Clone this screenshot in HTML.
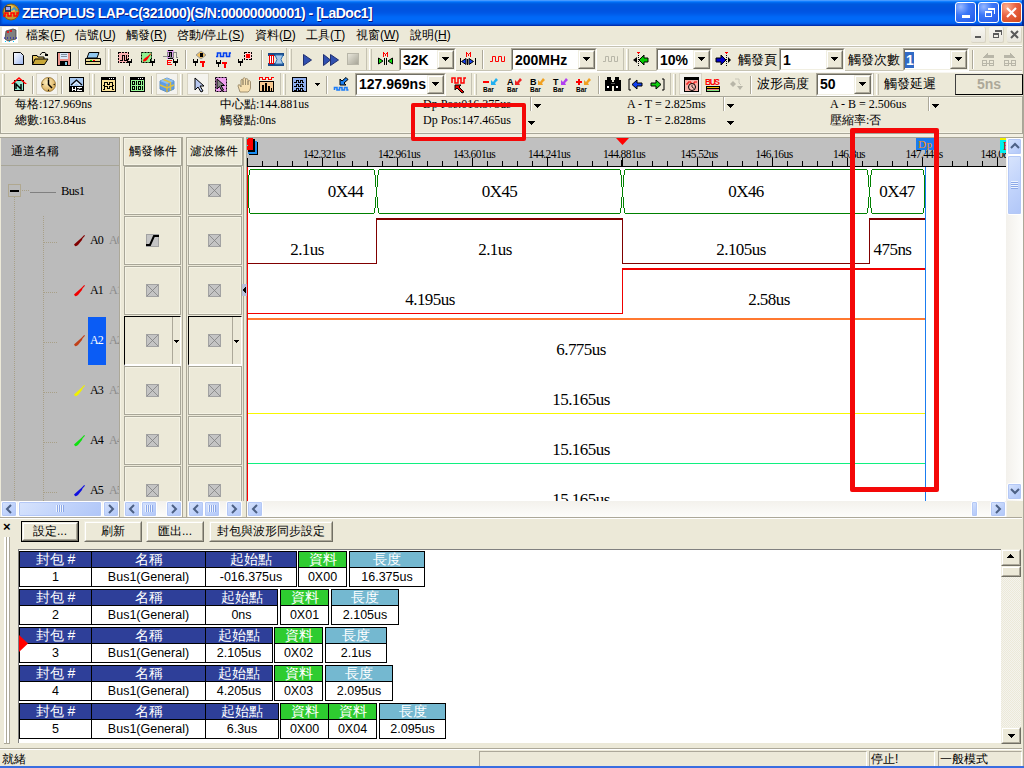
<!DOCTYPE html>
<html><head><meta charset="utf-8">
<style>
*{box-sizing:border-box;margin:0;padding:0}
html,body{width:1024px;height:768px;overflow:hidden;background:#ECE9D8;font-family:"Liberation Sans",sans-serif;font-size:12px;color:#000;position:relative}
.a{position:absolute;white-space:nowrap}
svg.a{overflow:visible}
.ser{font-family:"Liberation Serif",serif}
.b{font-weight:bold}
</style></head><body>
<div class="a" style="left:0px;top:0px;width:1024px;height:26px;background:linear-gradient(to bottom,#4699FF 0px 1px,#127EFF 1px 2px,#006AF0 2px 3px,#005EE4 3px 4px,#0058DE 4px 5px,#0057DE 5px 6px,#0056DE 6px 7px,#0055DF 7px 8px,#0054E0 8px 9px,#0054E0 9px 10px,#0054E1 10px 11px,#0055E3 11px 12px,#0057E5 12px 13px,#005AE8 13px 14px,#005EEC 14px 15px,#0062F0 15px 16px,#0066F5 16px 17px,#0068F7 17px 18px,#0069F8 18px 19px,#0069F8 19px 20px,#0068F7 20px 21px,#0066F5 21px 22px,#0062F0 22px 23px,#005AE8 23px 24px,#0046D0 24px 25px,#0030B0 25px 26px)"></div>
<div class="a" style="left:0px;top:0px;width:3px;height:26px;background:linear-gradient(to right,#0040C0,rgba(0,64,192,0))"></div>
<svg class="a" style="left:2px;top:3px;shape-rendering:auto" width="18" height="18" viewBox="0 0 18 18" shape-rendering="crispEdges"><circle cx="9" cy="9" r="8" fill="#C89830" stroke="#806010"/><circle cx="8" cy="7" r="5" fill="#E8C050"/><rect x="3" y="3" width="6" height="6" fill="#303850"/><rect x="4" y="4" width="4" height="3" fill="#A0A8F0"/><polyline points="1,13 3,13 3,10 6,10 6,13 9,13 9,10 12,10 12,13 15,13 15,10 17,10" fill="none" stroke="#F00" stroke-width="1.5"/><polyline points="9,7 11,7 11,5 13,5 13,7 16,7" fill="none" stroke="#1090F0" stroke-width="1"/></svg>
<div class="a " style="left:22px;top:4px;color:#fff;font-weight:bold;font-size:14px;line-height:18px;text-shadow:1px 1px 0 #0A1883;letter-spacing:-0.48px">ZEROPLUS LAP-C(321000)(S/N:00000000001) - [LaDoc1]</div>
<div class="a" style="left:955px;top:2px;width:21px;height:21px;border:1px solid #fff;border-radius:3px;background:radial-gradient(circle at 25% 20%,#98B8FF 0%,#3C78F8 40%,#2258E8 100%)"></div>
<div class="a" style="left:978px;top:2px;width:21px;height:21px;border:1px solid #fff;border-radius:3px;background:radial-gradient(circle at 25% 20%,#98B8FF 0%,#3C78F8 40%,#2258E8 100%)"></div>
<div class="a" style="left:1001px;top:2px;width:21px;height:21px;border:1px solid #fff;border-radius:3px;background:radial-gradient(circle at 25% 20%,#FFB090 0%,#E86040 45%,#D04818 100%)"></div>
<div class="a" style="left:962px;top:15px;width:8px;height:3px;background:#fff"></div>
<div class="a" style="left:985px;top:11px;width:7px;height:6px;border:1px solid #fff;border-top-width:2px"></div>
<div class="a" style="left:988px;top:8px;width:7px;height:6px;border-top:2px solid #fff;border-right:1px solid #fff"></div>
<svg class="a" style="left:1005px;top:6px;shape-rendering:auto" width="13" height="13" viewBox="0 0 13 13" shape-rendering="crispEdges"><path d="M2,2 L11,11 M11,2 L2,11" stroke="#fff" stroke-width="2.2"/></svg>
<div class="a" style="left:1022px;top:0px;width:2px;height:26px;background:linear-gradient(#0040C0,#002890)"></div>
<div class="a" style="left:1023px;top:26px;width:1px;height:740px;background:#ACA899"></div>
<svg class="a" style="left:2px;top:27px;shape-rendering:auto" width="16" height="16" viewBox="0 0 16 16" shape-rendering="crispEdges"><rect x="0" y="0" width="16" height="16" fill="#fff"/><polygon points="4,4 11,2 14,3 14,12 6,14 3,12" fill="#808080" stroke="#303030" stroke-width="0.7"/><circle cx="6" cy="5" r="1" fill="#F00"/><circle cx="9" cy="4" r="1" fill="#F00"/><line x1="2" y1="11" x2="15" y2="11" stroke="#00C" stroke-dasharray="1,2"/><line x1="3" y1="14.5" x2="15" y2="14.5" stroke="#0CF" stroke-dasharray="1,3"/></svg>
<div class="a " style="left:26px;top:28px;font-size:12px;line-height:15px">檔案(<u>F</u>)</div>
<div class="a " style="left:75px;top:28px;font-size:12px;line-height:15px">信號(<u>U</u>)</div>
<div class="a " style="left:126px;top:28px;font-size:12px;line-height:15px">觸發(<u>R</u>)</div>
<div class="a " style="left:177px;top:28px;font-size:12px;line-height:15px">啓動/停止(<u>S</u>)</div>
<div class="a " style="left:255px;top:28px;font-size:12px;line-height:15px">資料(<u>D</u>)</div>
<div class="a " style="left:306px;top:28px;font-size:12px;line-height:15px">工具(<u>T</u>)</div>
<div class="a " style="left:356px;top:28px;font-size:12px;line-height:15px">視窗(<u>W</u>)</div>
<div class="a " style="left:410px;top:28px;font-size:12px;line-height:15px">說明(<u>H</u>)</div>
<div class="a" style="left:971px;top:27px;width:15px;height:16px;background:linear-gradient(#F8F7F2,#E8E6DC);border-radius:2px;border-right:1px solid #D8D4C4;border-bottom:1px solid #D8D4C4"></div>
<div class="a" style="left:989px;top:27px;width:15px;height:16px;background:linear-gradient(#F8F7F2,#E8E6DC);border-radius:2px;border-right:1px solid #D8D4C4;border-bottom:1px solid #D8D4C4"></div>
<div class="a" style="left:1007px;top:27px;width:15px;height:16px;background:linear-gradient(#F8F7F2,#E8E6DC);border-radius:2px;border-right:1px solid #D8D4C4;border-bottom:1px solid #D8D4C4"></div>
<div class="a" style="left:975px;top:36px;width:6px;height:2px;background:#5A5A5A"></div>
<div class="a" style="left:993px;top:33px;width:6px;height:5px;border:1px solid #5A5A5A;border-top-width:2px"></div>
<div class="a" style="left:995px;top:30px;width:7px;height:5px;border-top:2px solid #5A5A5A;border-right:1px solid #5A5A5A"></div>
<svg class="a" style="left:1010px;top:30px;shape-rendering:auto" width="9" height="9" viewBox="0 0 9 9" shape-rendering="crispEdges"><path d="M1,1 L8,8 M8,1 L1,8" stroke="#5A5A5A" stroke-width="2"/></svg>
<div class="a" style="left:0px;top:45px;width:1022px;height:1px;background:#fff"></div>
<div class="a" style="left:0px;top:46px;width:1022px;height:1px;background:#C5C2B2"></div>
<div class="a" style="left:0px;top:47px;width:1022px;height:1px;background:#F8F7F1"></div>
<div class="a" style="left:0px;top:70px;width:1022px;height:1px;background:#C5C2B2"></div>
<div class="a" style="left:0px;top:71px;width:1022px;height:1px;background:#FFFFFF"></div>
<div class="a" style="left:0px;top:72px;width:1022px;height:1px;background:#F8F7F1"></div>
<div class="a" style="left:0px;top:96px;width:1023px;height:1px;background:#A8A698"></div>
<div class="a" style="left:2px;top:49px;width:1px;height:21px;background:#fff"></div>
<div class="a" style="left:3px;top:49px;width:1px;height:21px;background:#ECE9D8"></div>
<div class="a" style="left:4px;top:49px;width:1px;height:21px;background:#C5C2B2"></div>
<div class="a" style="left:108px;top:49px;width:1px;height:21px;background:#fff"></div>
<div class="a" style="left:109px;top:49px;width:1px;height:21px;background:#ECE9D8"></div>
<div class="a" style="left:110px;top:49px;width:1px;height:21px;background:#C5C2B2"></div>
<div class="a" style="left:289px;top:49px;width:1px;height:21px;background:#fff"></div>
<div class="a" style="left:290px;top:49px;width:1px;height:21px;background:#ECE9D8"></div>
<div class="a" style="left:291px;top:49px;width:1px;height:21px;background:#C5C2B2"></div>
<div class="a" style="left:369px;top:49px;width:1px;height:21px;background:#fff"></div>
<div class="a" style="left:370px;top:49px;width:1px;height:21px;background:#ECE9D8"></div>
<div class="a" style="left:371px;top:49px;width:1px;height:21px;background:#C5C2B2"></div>
<div class="a" style="left:626px;top:49px;width:1px;height:21px;background:#fff"></div>
<div class="a" style="left:627px;top:49px;width:1px;height:21px;background:#ECE9D8"></div>
<div class="a" style="left:628px;top:49px;width:1px;height:21px;background:#C5C2B2"></div>
<div class="a" style="left:105px;top:48px;width:1px;height:22px;background:#C5C2B2"></div>
<div class="a" style="left:286px;top:48px;width:1px;height:22px;background:#C5C2B2"></div>
<div class="a" style="left:366px;top:48px;width:1px;height:22px;background:#C5C2B2"></div>
<div class="a" style="left:623px;top:48px;width:1px;height:22px;background:#C5C2B2"></div>
<div class="a" style="left:2px;top:74px;width:1px;height:21px;background:#fff"></div>
<div class="a" style="left:3px;top:74px;width:1px;height:21px;background:#ECE9D8"></div>
<div class="a" style="left:4px;top:74px;width:1px;height:21px;background:#C5C2B2"></div>
<div class="a" style="left:92px;top:74px;width:1px;height:21px;background:#fff"></div>
<div class="a" style="left:93px;top:74px;width:1px;height:21px;background:#ECE9D8"></div>
<div class="a" style="left:94px;top:74px;width:1px;height:21px;background:#C5C2B2"></div>
<div class="a" style="left:180px;top:74px;width:1px;height:21px;background:#fff"></div>
<div class="a" style="left:181px;top:74px;width:1px;height:21px;background:#ECE9D8"></div>
<div class="a" style="left:182px;top:74px;width:1px;height:21px;background:#C5C2B2"></div>
<div class="a" style="left:283px;top:74px;width:1px;height:21px;background:#fff"></div>
<div class="a" style="left:284px;top:74px;width:1px;height:21px;background:#ECE9D8"></div>
<div class="a" style="left:285px;top:74px;width:1px;height:21px;background:#C5C2B2"></div>
<div class="a" style="left:474px;top:74px;width:1px;height:21px;background:#fff"></div>
<div class="a" style="left:475px;top:74px;width:1px;height:21px;background:#ECE9D8"></div>
<div class="a" style="left:476px;top:74px;width:1px;height:21px;background:#C5C2B2"></div>
<div class="a" style="left:673px;top:74px;width:1px;height:21px;background:#fff"></div>
<div class="a" style="left:674px;top:74px;width:1px;height:21px;background:#ECE9D8"></div>
<div class="a" style="left:675px;top:74px;width:1px;height:21px;background:#C5C2B2"></div>
<div class="a" style="left:876px;top:74px;width:1px;height:21px;background:#fff"></div>
<div class="a" style="left:877px;top:74px;width:1px;height:21px;background:#ECE9D8"></div>
<div class="a" style="left:878px;top:74px;width:1px;height:21px;background:#C5C2B2"></div>
<div class="a" style="left:89px;top:73px;width:1px;height:22px;background:#C5C2B2"></div>
<div class="a" style="left:177px;top:73px;width:1px;height:22px;background:#C5C2B2"></div>
<div class="a" style="left:280px;top:73px;width:1px;height:22px;background:#C5C2B2"></div>
<div class="a" style="left:471px;top:73px;width:1px;height:22px;background:#C5C2B2"></div>
<div class="a" style="left:670px;top:73px;width:1px;height:22px;background:#C5C2B2"></div>
<div class="a" style="left:873px;top:73px;width:1px;height:22px;background:#C5C2B2"></div>
<svg class="a" style="left:13px;top:52px;shape-rendering:auto" width="12" height="14" viewBox="0 0 12 14" shape-rendering="crispEdges"><defs><linearGradient id="gn" x1="0" y1="0" x2="1" y2="1"><stop offset="0" stop-color="#fff"/><stop offset="1" stop-color="#9DB8EE"/></linearGradient></defs><polygon points="0.5,0.5 7.5,0.5 10.5,3.5 10.5,12.5 0.5,12.5" fill="url(#gn)" stroke="#000"/></svg>
<svg class="a" style="left:32px;top:52px;shape-rendering:auto" width="17" height="14" viewBox="0 0 17 14" shape-rendering="crispEdges"><polygon points="0.5,3.5 5,3.5 6,5 12,5 12,12.5 0.5,12.5" fill="#E8C860" stroke="#000"/><polygon points="3,7 16,7 12.5,12.5 0.5,12.5" fill="#C8A838" stroke="#000"/><polyline points="8,3 10,0.5 13,0.5 15,3" fill="none" stroke="#000" stroke-width="1"/><rect x="13" y="2" width="3" height="2" fill="#000"/></svg>
<svg class="a" style="left:57px;top:52px;" width="14" height="14" viewBox="0 0 14 14" shape-rendering="crispEdges"><rect x="0" y="0" width="14" height="14" fill="#000"/><rect x="1" y="1" width="12" height="12" fill="#E89088"/><rect x="3" y="1" width="8" height="6" fill="#D8E8F8"/><rect x="4" y="2" width="6" height="1" fill="#8090A0"/><rect x="4" y="4" width="6" height="1" fill="#8090A0"/><rect x="3" y="9" width="8" height="4" fill="#000"/><rect x="8" y="10" width="2" height="3" fill="#80D0E8"/></svg>
<div class="a" style="left:78px;top:50px;width:1px;height:19px;background:#ACA899"></div>
<div class="a" style="left:79px;top:50px;width:1px;height:19px;background:#fff"></div>
<svg class="a" style="left:85px;top:52px;shape-rendering:auto" width="16" height="14" viewBox="0 0 16 14" shape-rendering="crispEdges"><polygon points="4,0.5 14,0.5 12,6 2,6" fill="#90C8F0" stroke="#000"/><polygon points="0.5,6.5 15.5,6.5 15.5,12.5 0.5,12.5" fill="#E8D898" stroke="#000"/><rect x="1" y="9" width="14" height="1" fill="#000"/><rect x="5" y="8" width="2" height="1" fill="#0C0"/><rect x="8" y="8" width="2" height="1" fill="#F00"/></svg>
<svg class="a" style="left:118px;top:52px;" width="16" height="15" viewBox="0 0 16 15" shape-rendering="crispEdges"><rect x="0" y="0" width="11" height="11" fill="#F8B0B0"/><rect x="0.5" y="0.5" width="10" height="10" fill="none" stroke="#000" stroke-dasharray="2,1"/><polyline points="2,8 4,8 4,3 6,3 6,8 8,8 8,3 9,3" fill="none" stroke="#000" stroke-width="1"/><rect x="9" y="7" width="1" height="3" fill="#000"/><rect x="13" y="7" width="1" height="3" fill="#000"/><rect x="9" y="9" width="5" height="2" fill="#000"/><rect x="11" y="10" width="1" height="4" fill="#000"/></svg>
<svg class="a" style="left:141px;top:52px;shape-rendering:auto" width="16" height="15" viewBox="0 0 16 15" shape-rendering="crispEdges"><rect x="0" y="0" width="11" height="11" fill="#90F090"/><rect x="0.5" y="0.5" width="10" height="10" fill="none" stroke="#000" stroke-dasharray="2,1"/><path d="M2,9.5 Q1.5,7.5 4,6 L7,4 L9.5,1.5 L10,2 L8,5 L6,8 Q4,10 2,9.5 Z" fill="#F00"/><rect x="9" y="7" width="1" height="3" fill="#000"/><rect x="13" y="7" width="1" height="3" fill="#000"/><rect x="9" y="9" width="5" height="2" fill="#000"/><rect x="11" y="10" width="1" height="4" fill="#000"/></svg>
<svg class="a" style="left:163px;top:50px;" width="16" height="16" viewBox="0 0 16 16" shape-rendering="crispEdges"><rect x="4" y="0" width="7" height="9" fill="#E0A0F0"/><rect x="5" y="0" width="5" height="1" fill="#000"/><rect x="5" y="8" width="5" height="1" fill="#000"/><polyline points="0,6 4,6 4,2 7,2 7,7 10,7 10,2 13,2 13,7 15,7" fill="none" stroke="#888" stroke-width="1"/><polyline points="5,6 6,6 6,2 8,2 8,6 9,6" fill="none" stroke="#000" stroke-width="1"/><rect x="4" y="10" width="5" height="1" fill="#F00"/><rect x="4" y="10" width="1" height="5" fill="#F00"/><rect x="4" y="12" width="4" height="1" fill="#F00"/><rect x="4" y="14" width="5" height="1" fill="#F00"/><rect x="10" y="9" width="1" height="3" fill="#000"/><rect x="14" y="9" width="1" height="3" fill="#000"/><rect x="10" y="11" width="5" height="2" fill="#000"/><rect x="12" y="12" width="1" height="4" fill="#000"/></svg>
<div class="a" style="left:185px;top:50px;width:1px;height:19px;background:#ACA899"></div>
<div class="a" style="left:186px;top:50px;width:1px;height:19px;background:#fff"></div>
<svg class="a" style="left:193px;top:51px;shape-rendering:auto" width="16" height="16" viewBox="0 0 16 16" shape-rendering="crispEdges"><polygon points="3,4 8,0 13,4 8,8" fill="#F0C060" stroke="#999"/><rect x="7" y="2" width="3" height="4" fill="#000"/><rect x="0" y="8" width="1" height="3" fill="#000"/><rect x="4" y="8" width="1" height="3" fill="#000"/><rect x="0" y="10" width="5" height="2" fill="#000"/><rect x="2" y="11" width="1" height="4" fill="#000"/><rect x="7" y="10" width="5" height="1" fill="#F00"/><rect x="9" y="10" width="1" height="5" fill="#F00"/><rect x="7" y="10" width="5" height="2" fill="#F00"/><rect x="9" y="10" width="2" height="6" fill="#F00"/></svg>
<svg class="a" style="left:216px;top:52px;shape-rendering:auto" width="16" height="16" viewBox="0 0 16 16" shape-rendering="crispEdges"><polyline points="0,4.5 1.5,4.5 1.5,1 4.5,1 4.5,4.5 7.5,4.5 7.5,1 10.5,1 10.5,4.5 13.5,4.5 13.5,1 15,1" fill="none" stroke="#0040F0" stroke-width="1.6"/><rect x="0" y="8" width="1" height="3" fill="#000"/><rect x="4" y="8" width="1" height="3" fill="#000"/><rect x="0" y="10" width="5" height="2" fill="#000"/><rect x="2" y="11" width="1" height="4" fill="#000"/><rect x="6" y="10" width="5" height="1" fill="#F00"/><rect x="8" y="10" width="1" height="5" fill="#F00"/><rect x="6" y="10" width="5" height="2" fill="#F00"/><rect x="8" y="10" width="2" height="6" fill="#F00"/></svg>
<svg class="a" style="left:238px;top:52px;" width="16" height="15" viewBox="0 0 16 15" shape-rendering="crispEdges"><rect x="6" y="0" width="8" height="8" fill="#FFD0D0"/><rect x="6.5" y="0.5" width="7" height="7" fill="none" stroke="#000" stroke-dasharray="2,1"/><rect x="8" y="2" width="4" height="4" fill="#F00"/><rect x="0" y="7" width="1" height="3" fill="#000"/><rect x="4" y="7" width="1" height="3" fill="#000"/><rect x="0" y="9" width="5" height="2" fill="#000"/><rect x="2" y="10" width="1" height="4" fill="#000"/></svg>
<div class="a" style="left:261px;top:50px;width:1px;height:19px;background:#ACA899"></div>
<div class="a" style="left:262px;top:50px;width:1px;height:19px;background:#fff"></div>
<svg class="a" style="left:268px;top:52px;shape-rendering:auto" width="16" height="15" viewBox="0 0 16 15" shape-rendering="crispEdges"><rect x="0" y="1" width="16" height="3" fill="#1A4A8A"/><rect x="0" y="11" width="16" height="3" fill="#1A4A8A"/><rect x="1" y="3" width="5" height="9" fill="#E00"/><rect x="2" y="4" width="1" height="7" fill="#fff"/><rect x="4" y="4" width="1" height="7" fill="#fff"/><polygon points="7,3 15,3 13,7.5 15,12 7,12 9,7.5" fill="#A8C8E8" stroke="#3070B0"/></svg>
<svg class="a" style="left:303px;top:54px;shape-rendering:auto" width="9" height="12" viewBox="0 0 9 12" shape-rendering="crispEdges"><polygon points="0.5,0.5 8.5,6 0.5,11.5" fill="#3050B0" stroke="#203070"/></svg>
<svg class="a" style="left:323px;top:54px;shape-rendering:auto" width="16" height="12" viewBox="0 0 16 12" shape-rendering="crispEdges"><polygon points="0.5,0.5 7.5,6 0.5,11.5" fill="#3050B0" stroke="#203070"/><polygon points="7.5,0.5 15.5,6 7.5,11.5" fill="#3050B0" stroke="#203070"/></svg>
<svg class="a" style="left:347px;top:53px;" width="12" height="12" viewBox="0 0 12 12" shape-rendering="crispEdges"><defs><linearGradient id="gs" x1="0" y1="0" x2="1" y2="1"><stop offset="0" stop-color="#E8E6DA"/><stop offset="1" stop-color="#A8A698"/></linearGradient></defs><rect x="0" y="0" width="12" height="12" fill="#B8B6A8"/><rect x="1" y="1" width="10" height="10" fill="url(#gs)"/></svg>
<svg class="a" style="left:378px;top:52px;shape-rendering:auto" width="16" height="14" viewBox="0 0 16 14" shape-rendering="crispEdges"><rect x="5" y="0" width="1" height="5" fill="#F00"/><rect x="6" y="1" width="1" height="1" fill="#F00"/><rect x="7" y="2" width="1" height="2" fill="#F00"/><rect x="8" y="1" width="1" height="1" fill="#F00"/><rect x="9" y="0" width="1" height="5" fill="#F00"/><rect x="4" y="0" width="7" height="1" fill="none"/><polygon points="0.5,6 5,9 0.5,12" fill="#10E010" stroke="#000"/><rect x="6" y="6" width="1" height="7" fill="#000"/><rect x="8" y="6" width="1" height="7" fill="#000"/><polygon points="14.5,6 10,9 14.5,12" fill="#10E010" stroke="#000"/></svg>
<div class="a" style="left:399px;top:48px;width:57px;height:23px;background:#fff;border-top:1px solid #ACA899;border-left:1px solid #ACA899;border-bottom:1px solid #fff;border-right:1px solid #fff"></div>
<div class="a" style="left:400px;top:49px;width:55px;height:21px;border-top:1px solid #716F64;border-left:1px solid #716F64;border-bottom:1px solid #F1EFE2;border-right:1px solid #F1EFE2"></div>
<div class="a" style="left:437px;top:50px;width:17px;height:19px;background:#ECE9D8;border-top:1px solid #F1EFE2;border-left:1px solid #F1EFE2;border-bottom:1px solid #716F64;border-right:1px solid #716F64"></div>
<div class="a" style="left:438px;top:51px;width:15px;height:17px;border-top:1px solid #fff;border-left:1px solid #fff;border-bottom:1px solid #ACA899;border-right:1px solid #ACA899"></div>
<svg class="a" style="left:442px;top:57px;" width="7" height="4" viewBox="0 0 7 4" shape-rendering="crispEdges"><rect x="0" y="0" width="7" height="1" fill="#000"/><rect x="1" y="1" width="5" height="1" fill="#000"/><rect x="2" y="2" width="3" height="1" fill="#000"/><rect x="3" y="3" width="1" height="1" fill="#000"/></svg>
<div class="a " style="left:403px;top:53px;font-weight:bold;font-size:14px;line-height:14px;">32K</div>
<svg class="a" style="left:460px;top:52px;shape-rendering:auto" width="16" height="14" viewBox="0 0 16 14" shape-rendering="crispEdges"><rect x="6" y="0" width="1" height="5" fill="#F00"/><rect x="7" y="1" width="1" height="1" fill="#F00"/><rect x="8" y="2" width="1" height="2" fill="#F00"/><rect x="9" y="1" width="1" height="1" fill="#F00"/><rect x="10" y="0" width="1" height="5" fill="#F00"/><rect x="5" y="0" width="7" height="1" fill="none"/><rect x="0" y="6" width="1" height="7" fill="#000"/><polygon points="1.5,9.5 6,6.5 6,12.5" fill="#1040F0" stroke="#000"/><rect x="7" y="7" width="1" height="6" fill="#000"/><polygon points="13.5,9.5 9,6.5 9,12.5" fill="#1040F0" stroke="#000"/><rect x="15" y="6" width="1" height="7" fill="#000"/></svg>
<div class="a" style="left:482px;top:50px;width:1px;height:19px;background:#ACA899"></div>
<div class="a" style="left:483px;top:50px;width:1px;height:19px;background:#fff"></div>
<svg class="a" style="left:490px;top:55px;shape-rendering:auto" width="16" height="8" viewBox="0 0 16 8" shape-rendering="crispEdges"><polyline points="0,6.5 2.5,6.5 2.5,1.5 5.5,1.5 5.5,6.5 8.5,6.5 8.5,1.5 11.5,1.5 11.5,6.5 14.5,6.5 14.5,1.5 15,1.5" fill="none" stroke="#F00" stroke-width="1"/></svg>
<div class="a" style="left:511px;top:48px;width:86px;height:23px;background:#fff;border-top:1px solid #ACA899;border-left:1px solid #ACA899;border-bottom:1px solid #fff;border-right:1px solid #fff"></div>
<div class="a" style="left:512px;top:49px;width:84px;height:21px;border-top:1px solid #716F64;border-left:1px solid #716F64;border-bottom:1px solid #F1EFE2;border-right:1px solid #F1EFE2"></div>
<div class="a" style="left:578px;top:50px;width:17px;height:19px;background:#ECE9D8;border-top:1px solid #F1EFE2;border-left:1px solid #F1EFE2;border-bottom:1px solid #716F64;border-right:1px solid #716F64"></div>
<div class="a" style="left:579px;top:51px;width:15px;height:17px;border-top:1px solid #fff;border-left:1px solid #fff;border-bottom:1px solid #ACA899;border-right:1px solid #ACA899"></div>
<svg class="a" style="left:583px;top:57px;" width="7" height="4" viewBox="0 0 7 4" shape-rendering="crispEdges"><rect x="0" y="0" width="7" height="1" fill="#000"/><rect x="1" y="1" width="5" height="1" fill="#000"/><rect x="2" y="2" width="3" height="1" fill="#000"/><rect x="3" y="3" width="1" height="1" fill="#000"/></svg>
<div class="a " style="left:515px;top:53px;font-weight:bold;font-size:14px;line-height:14px;">200MHz</div>
<svg class="a" style="left:603px;top:55px;shape-rendering:auto" width="16" height="8" viewBox="0 0 16 8" shape-rendering="crispEdges"><polyline points="0,6.5 2.5,6.5 2.5,1.5 5.5,1.5 5.5,6.5 8.5,6.5 8.5,1.5 11.5,1.5 11.5,6.5 14.5,6.5 14.5,1.5 15,1.5" fill="none" stroke="#B8B6A8" stroke-width="1"/></svg>
<svg class="a" style="left:633px;top:52px;shape-rendering:auto" width="16" height="15" viewBox="0 0 16 15" shape-rendering="crispEdges"><rect x="4" y="0" width="3" height="1" fill="#F00"/><rect x="5" y="1" width="1" height="1" fill="#F00"/><rect x="5" y="3" width="1" height="1" fill="#000"/><rect x="5" y="5" width="1" height="1" fill="#000"/><rect x="5" y="7" width="1" height="1" fill="#000"/><rect x="5" y="9" width="1" height="1" fill="#000"/><rect x="5" y="11" width="1" height="1" fill="#000"/><rect x="5" y="13" width="1" height="1" fill="#000"/><polygon points="6,8 11,3 11,6 15,6 15,10 11,10 11,13" fill="#0C0" stroke="#000"/><polygon points="0,8 4,5 4,11" fill="#000" stroke="none"/></svg>
<div class="a" style="left:656px;top:48px;width:56px;height:23px;background:#fff;border-top:1px solid #ACA899;border-left:1px solid #ACA899;border-bottom:1px solid #fff;border-right:1px solid #fff"></div>
<div class="a" style="left:657px;top:49px;width:54px;height:21px;border-top:1px solid #716F64;border-left:1px solid #716F64;border-bottom:1px solid #F1EFE2;border-right:1px solid #F1EFE2"></div>
<div class="a" style="left:693px;top:50px;width:17px;height:19px;background:#ECE9D8;border-top:1px solid #F1EFE2;border-left:1px solid #F1EFE2;border-bottom:1px solid #716F64;border-right:1px solid #716F64"></div>
<div class="a" style="left:694px;top:51px;width:15px;height:17px;border-top:1px solid #fff;border-left:1px solid #fff;border-bottom:1px solid #ACA899;border-right:1px solid #ACA899"></div>
<svg class="a" style="left:698px;top:57px;" width="7" height="4" viewBox="0 0 7 4" shape-rendering="crispEdges"><rect x="0" y="0" width="7" height="1" fill="#000"/><rect x="1" y="1" width="5" height="1" fill="#000"/><rect x="2" y="2" width="3" height="1" fill="#000"/><rect x="3" y="3" width="1" height="1" fill="#000"/></svg>
<div class="a " style="left:660px;top:53px;font-weight:bold;font-size:14px;line-height:14px;">10%</div>
<svg class="a" style="left:716px;top:52px;shape-rendering:auto" width="16" height="15" viewBox="0 0 16 15" shape-rendering="crispEdges"><rect x="9" y="0" width="3" height="1" fill="#F00"/><rect x="10" y="1" width="1" height="1" fill="#F00"/><rect x="10" y="3" width="1" height="1" fill="#000"/><rect x="10" y="5" width="1" height="1" fill="#000"/><rect x="10" y="7" width="1" height="1" fill="#000"/><rect x="10" y="9" width="1" height="1" fill="#000"/><rect x="10" y="11" width="1" height="1" fill="#000"/><rect x="10" y="13" width="1" height="1" fill="#000"/><polygon points="10,8 5,3 5,6 0,6 0,10 5,10 5,13" fill="#00C" stroke="#000"/><polygon points="15,8 12,5 12,11" fill="#000" stroke="none"/></svg>
<div class="a " style="left:738px;top:52px;font-size:13px;line-height:16px">觸發頁</div>
<div class="a" style="left:779px;top:48px;width:66px;height:23px;background:#fff;border-top:1px solid #ACA899;border-left:1px solid #ACA899;border-bottom:1px solid #fff;border-right:1px solid #fff"></div>
<div class="a" style="left:780px;top:49px;width:64px;height:21px;border-top:1px solid #716F64;border-left:1px solid #716F64;border-bottom:1px solid #F1EFE2;border-right:1px solid #F1EFE2"></div>
<div class="a" style="left:826px;top:50px;width:17px;height:19px;background:#ECE9D8;border-top:1px solid #F1EFE2;border-left:1px solid #F1EFE2;border-bottom:1px solid #716F64;border-right:1px solid #716F64"></div>
<div class="a" style="left:827px;top:51px;width:15px;height:17px;border-top:1px solid #fff;border-left:1px solid #fff;border-bottom:1px solid #ACA899;border-right:1px solid #ACA899"></div>
<svg class="a" style="left:831px;top:57px;" width="7" height="4" viewBox="0 0 7 4" shape-rendering="crispEdges"><rect x="0" y="0" width="7" height="1" fill="#000"/><rect x="1" y="1" width="5" height="1" fill="#000"/><rect x="2" y="2" width="3" height="1" fill="#000"/><rect x="3" y="3" width="1" height="1" fill="#000"/></svg>
<div class="a " style="left:783px;top:53px;font-weight:bold;font-size:14px;line-height:14px;">1</div>
<div class="a " style="left:848px;top:52px;font-size:13px;line-height:16px">觸發次數</div>
<div class="a" style="left:903px;top:48px;width:66px;height:23px;background:#fff;border-top:1px solid #ACA899;border-left:1px solid #ACA899;border-bottom:1px solid #fff;border-right:1px solid #fff"></div>
<div class="a" style="left:904px;top:49px;width:64px;height:21px;border-top:1px solid #716F64;border-left:1px solid #716F64;border-bottom:1px solid #F1EFE2;border-right:1px solid #F1EFE2"></div>
<div class="a" style="left:950px;top:50px;width:17px;height:19px;background:#ECE9D8;border-top:1px solid #F1EFE2;border-left:1px solid #F1EFE2;border-bottom:1px solid #716F64;border-right:1px solid #716F64"></div>
<div class="a" style="left:951px;top:51px;width:15px;height:17px;border-top:1px solid #fff;border-left:1px solid #fff;border-bottom:1px solid #ACA899;border-right:1px solid #ACA899"></div>
<svg class="a" style="left:955px;top:57px;" width="7" height="4" viewBox="0 0 7 4" shape-rendering="crispEdges"><rect x="0" y="0" width="7" height="1" fill="#000"/><rect x="1" y="1" width="5" height="1" fill="#000"/><rect x="2" y="2" width="3" height="1" fill="#000"/><rect x="3" y="3" width="1" height="1" fill="#000"/></svg>
<div class="a" style="left:905px;top:52px;width:9px;height:16px;background:#316AC5"></div>
<div class="a " style="left:906px;top:53px;color:#fff;font-weight:bold;font-size:14px;line-height:14px">1</div>
<div class="a" style="left:972px;top:50px;width:1px;height:19px;background:#ACA899"></div>
<div class="a" style="left:973px;top:50px;width:1px;height:19px;background:#fff"></div>
<svg class="a" style="left:981px;top:52px;" width="14" height="14" viewBox="0 0 14 14" shape-rendering="crispEdges"><polygon points="2,5 7,1 7,3 13,3 13,6 2,6" fill="#B8B6A8" stroke="none"/><rect x="1" y="8" width="5" height="6" fill="none"/><rect x="1.5" y="8.5" width="4" height="5" fill="none" stroke="#B8B6A8"/><rect x="8.5" y="8.5" width="4" height="5" fill="none" stroke="#B8B6A8"/><rect x="1" y="11" width="12" height="1" fill="#B8B6A8"/></svg>
<svg class="a" style="left:1003px;top:52px;" width="14" height="14" viewBox="0 0 14 14" shape-rendering="crispEdges"><polygon points="12,5 7,1 7,3 1,3 1,6 12,6" fill="#B8B6A8" stroke="none"/><rect x="1.5" y="8.5" width="4" height="5" fill="none" stroke="#B8B6A8"/><rect x="8.5" y="8.5" width="4" height="5" fill="none" stroke="#B8B6A8"/><rect x="1" y="11" width="12" height="1" fill="#B8B6A8"/></svg>
<svg class="a" style="left:11px;top:77px;shape-rendering:auto" width="16" height="15" viewBox="0 0 16 15" shape-rendering="crispEdges"><rect x="3" y="3" width="10" height="11" fill="#000"/><rect x="4" y="4" width="8" height="9" fill="#90E8D0"/><polygon points="0,7 8,0 16,7 14,7 8,2 2,7" fill="#F00" stroke="none"/><polyline points="5,12 5,7 10,12 10,7" fill="none" stroke="#000" stroke-width="1.5"/></svg>
<div class="a" style="left:32px;top:76px;width:1px;height:18px;background:#ACA899"></div>
<div class="a" style="left:33px;top:76px;width:1px;height:18px;background:#fff"></div>
<div class="a" style="left:36px;top:73px;width:22px;height:22px;background:#F4F3EE;border:1px solid #D8D4C4"></div>
<svg class="a" style="left:41px;top:77px;shape-rendering:auto" width="15" height="15" viewBox="0 0 15 15" shape-rendering="crispEdges"><defs><radialGradient id="gc" cx="0.4" cy="0.35" r="0.7"><stop offset="0" stop-color="#FFF0C0"/><stop offset="1" stop-color="#D8A850"/></radialGradient></defs><circle cx="7.5" cy="7.5" r="7" fill="url(#gc)" stroke="#A08040"/><polyline points="7.5,2.5 7.5,7.5 11,11" fill="none" stroke="#000" stroke-width="1.5"/><circle cx="7.5" cy="1.8" r="0.7" fill="#000"/><circle cx="13.2" cy="7.5" r="0.7" fill="#000"/><circle cx="7.5" cy="13.2" r="0.7" fill="#000"/><circle cx="1.8" cy="7.5" r="0.7" fill="#000"/></svg>
<div class="a" style="left:61px;top:76px;width:1px;height:18px;background:#ACA899"></div>
<div class="a" style="left:62px;top:76px;width:1px;height:18px;background:#fff"></div>
<svg class="a" style="left:69px;top:77px;shape-rendering:auto" width="15" height="15" viewBox="0 0 15 15" shape-rendering="crispEdges"><rect x="0" y="0" width="15" height="15" fill="#000"/><rect x="1" y="1" width="13" height="8" fill="#A8C8F0"/><polyline points="2,8 7.5,3 13,8" fill="none" stroke="#000" stroke-width="1.2"/><polyline points="4,8 7.5,5.5 11,8" fill="none" stroke="#fff" stroke-width="1"/><rect x="3" y="10" width="1" height="4" fill="#fff"/><rect x="6" y="10" width="1" height="4" fill="#fff"/><rect x="3" y="12" width="4" height="1" fill="#fff"/><rect x="8" y="10" width="5" height="1" fill="#fff"/><rect x="8" y="13" width="5" height="1" fill="#fff"/><polygon points="12,10 13,10 9,13 8,13" fill="#fff" stroke="none"/></svg>
<svg class="a" style="left:101px;top:77px;" width="15" height="15" viewBox="0 0 15 15" shape-rendering="crispEdges"><rect x="0" y="0" width="15" height="15" fill="#000"/><rect x="1" y="3" width="13" height="11" fill="#F8E098"/><rect x="10" y="1" width="1" height="1" fill="#fff"/><rect x="12" y="1" width="1" height="1" fill="#fff"/><rect x="8" y="1" width="1" height="1" fill="#fff"/><polyline points="2,8 3,8 3,5 6,5 6,7 8,7 8,5 11,5 11,8 13,8" fill="none" stroke="#000" stroke-width="1"/><polyline points="2,12 3,12 3,9 6,9 6,11 8,11 8,9 11,9 11,12 13,12" fill="none" stroke="#000" stroke-width="1"/></svg>
<div class="a" style="left:123px;top:76px;width:1px;height:18px;background:#ACA899"></div>
<div class="a" style="left:124px;top:76px;width:1px;height:18px;background:#fff"></div>
<svg class="a" style="left:130px;top:77px;" width="15" height="15" viewBox="0 0 15 15" shape-rendering="crispEdges"><rect x="0" y="0" width="15" height="15" fill="#000"/><rect x="1" y="3" width="13" height="11" fill="#98F898"/><rect x="10" y="1" width="1" height="1" fill="#fff"/><rect x="12" y="1" width="1" height="1" fill="#fff"/><rect x="8" y="1" width="1" height="1" fill="#fff"/><rect x="2" y="4" width="3" height="4" fill="#000"/><rect x="3" y="5" width="1" height="2" fill="#98F898"/><rect x="6" y="4" width="1" height="4" fill="#000"/><rect x="8" y="4" width="3" height="4" fill="#000"/><rect x="9" y="5" width="1" height="2" fill="#98F898"/><rect x="12" y="4" width="1" height="4" fill="#000"/><rect x="2" y="9" width="3" height="4" fill="#000"/><rect x="3" y="10" width="1" height="2" fill="#98F898"/><rect x="6" y="9" width="1" height="4" fill="#000"/><rect x="8" y="9" width="3" height="4" fill="#000"/><rect x="9" y="10" width="1" height="2" fill="#98F898"/><rect x="12" y="9" width="1" height="4" fill="#000"/></svg>
<div class="a" style="left:151px;top:76px;width:1px;height:18px;background:#ACA899"></div>
<div class="a" style="left:152px;top:76px;width:1px;height:18px;background:#fff"></div>
<div class="a" style="left:156px;top:73px;width:22px;height:22px;background:#F4F3EE;border:1px solid #D8D4C4"></div>
<svg class="a" style="left:159px;top:77px;shape-rendering:auto" width="16" height="16" viewBox="0 0 16 16" shape-rendering="crispEdges"><polygon points="1,4 8,1 15,4 15,12 8,15 1,12" fill="#5C9CE8" stroke="#6090C0"/><polygon points="1,4 8,1 15,4 8,7" fill="#90C0F0" stroke="none"/><polyline points="8,7 8,15" fill="none" stroke="#D0B040" stroke-width="1.5"/><polyline points="1,8 8,11 15,8" fill="none" stroke="#E0C040" stroke-width="1.5"/><polyline points="4.5,2.5 11.5,5.5 11.5,13.5" fill="none" stroke="#E0C040" stroke-width="1.5"/></svg>
<div class="a" style="left:187px;top:73px;width:22px;height:22px;background:#F4F3EE;border:1px solid #D8D4C4"></div>
<svg class="a" style="left:194px;top:77px;shape-rendering:auto" width="11" height="16" viewBox="0 0 11 16" shape-rendering="crispEdges"><polygon points="1,1 1,13 4,10 7,15 9,14 6,9 10,9" fill="#B8C8F0" stroke="#000"/></svg>
<svg class="a" style="left:215px;top:77px;shape-rendering:auto" width="12" height="16" viewBox="0 0 12 16" shape-rendering="crispEdges"><rect x="0" y="0" width="12" height="15" fill="#F0A0F0"/><rect x="0.5" y="0.5" width="11" height="14" fill="none" stroke="#000" stroke-dasharray="2,1"/><polygon points="2,2 2,12 4.5,9.5 7,14 8.5,13 6,8.5 9.5,8.5" fill="#888" stroke="#000"/></svg>
<svg class="a" style="left:237px;top:77px;shape-rendering:auto" width="15" height="16" viewBox="0 0 15 16" shape-rendering="crispEdges"><path d="M3,15 L1,9 Q1,7 3,8 L4,10 L4,3 Q5,1.5 6,3 L6,8 L6,1.5 Q7.5,0 8.5,1.5 L8.5,8 L8.5,2 Q10,1 11,2.5 L11,8 L11,4 Q12.5,3 13.5,4.5 L13.5,11 Q13,14 11,15 Z" fill="#F8E0B0" stroke="#A09070"/></svg>
<svg class="a" style="left:259px;top:77px;" width="15" height="15" viewBox="0 0 15 15" shape-rendering="crispEdges"><rect x="0" y="0" width="1" height="3" fill="#F00"/><rect x="0" y="0" width="3" height="1" fill="#F00"/><rect x="3" y="0" width="1" height="3" fill="#F00"/><rect x="3" y="2" width="3" height="1" fill="#F00"/><rect x="6" y="0" width="1" height="3" fill="#F00"/><rect x="6" y="0" width="3" height="1" fill="#F00"/><rect x="9" y="0" width="1" height="3" fill="#F00"/><rect x="9" y="2" width="3" height="1" fill="#F00"/><rect x="12" y="0" width="1" height="3" fill="#F00"/><rect x="12" y="0" width="3" height="1" fill="#F00"/><rect x="0" y="4" width="15" height="11" fill="#000"/><rect x="1" y="5" width="13" height="9" fill="#F8C890"/><rect x="3" y="8" width="2" height="6" fill="#000"/><rect x="6" y="6" width="2" height="8" fill="#000"/><rect x="9" y="9" width="2" height="5" fill="#000"/><rect x="12" y="11" width="1" height="3" fill="#000"/></svg>
<svg class="a" style="left:292px;top:77px;" width="15" height="15" viewBox="0 0 15 15" shape-rendering="crispEdges"><rect x="0" y="0" width="15" height="15" fill="#000"/><rect x="1" y="1" width="13" height="13" fill="#90B0F0"/><polyline points="2,5 4,5 4,3 6,3 6,5 8,5 8,3 10,3 10,5 12,5" fill="none" stroke="#000" stroke-width="1"/><polyline points="2,9 4,9 4,7 6,7 6,9 8,9 8,7 10,7 10,9 12,9" fill="none" stroke="#000" stroke-width="1"/><polyline points="2,13 4,13 4,11 6,11 6,13 8,13 8,11 10,11 10,13 12,13" fill="none" stroke="#000" stroke-width="1"/></svg>
<svg class="a" style="left:315px;top:83px;" width="5" height="3" viewBox="0 0 5 3" shape-rendering="crispEdges"><rect x="0" y="0" width="5" height="1" fill="#000"/><rect x="1" y="1" width="3" height="1" fill="#000"/><rect x="2" y="2" width="1" height="1" fill="#000"/></svg>
<div class="a" style="left:326px;top:76px;width:1px;height:18px;background:#ACA899"></div>
<div class="a" style="left:327px;top:76px;width:1px;height:18px;background:#fff"></div>
<svg class="a" style="left:334px;top:77px;shape-rendering:auto" width="15" height="15" viewBox="0 0 15 15" shape-rendering="crispEdges"><polygon points="6,8 6,2 8,4 12,0.5 14,2.5 10,6 12,8" fill="#1C80F0" stroke="#000"/><polyline points="0.5,13 0.5,10.5 3,10.5 3,13 5.5,13 5.5,10.5 8,10.5 8,13 10.5,13 10.5,10.5 13,10.5 13,13 14.5,13" fill="none" stroke="#1C7CF8" stroke-width="1.6"/></svg>
<div class="a" style="left:355px;top:73px;width:91px;height:23px;background:#fff;border-top:1px solid #ACA899;border-left:1px solid #ACA899;border-bottom:1px solid #fff;border-right:1px solid #fff"></div>
<div class="a" style="left:356px;top:74px;width:89px;height:21px;border-top:1px solid #716F64;border-left:1px solid #716F64;border-bottom:1px solid #F1EFE2;border-right:1px solid #F1EFE2"></div>
<div class="a" style="left:427px;top:75px;width:17px;height:19px;background:#ECE9D8;border-top:1px solid #F1EFE2;border-left:1px solid #F1EFE2;border-bottom:1px solid #716F64;border-right:1px solid #716F64"></div>
<div class="a" style="left:428px;top:76px;width:15px;height:17px;border-top:1px solid #fff;border-left:1px solid #fff;border-bottom:1px solid #ACA899;border-right:1px solid #ACA899"></div>
<svg class="a" style="left:432px;top:82px;" width="7" height="4" viewBox="0 0 7 4" shape-rendering="crispEdges"><rect x="0" y="0" width="7" height="1" fill="#000"/><rect x="1" y="1" width="5" height="1" fill="#000"/><rect x="2" y="2" width="3" height="1" fill="#000"/><rect x="3" y="3" width="1" height="1" fill="#000"/></svg>
<div class="a " style="left:359px;top:77px;font-weight:bold;font-size:14px;line-height:14px;">127.969ns</div>
<svg class="a" style="left:452px;top:77px;shape-rendering:auto" width="15" height="17" viewBox="0 0 15 17" shape-rendering="crispEdges"><polyline points="0,6 0,1 3,1 3,6 6,6 6,1 9,1 9,6 12,6 12,1 14,1" fill="none" stroke="#F00" stroke-width="1.5"/><polygon points="3,8 9,8 7,10 12,15 10,16 5,11 3,13" fill="#E00" stroke="#000"/></svg>
<svg class="a" style="left:483px;top:77px;shape-rendering:auto" width="16" height="16" viewBox="0 0 16 16" shape-rendering="crispEdges"><rect x="0" y="4" width="6" height="2" fill="#F00"/><polygon points="8,8 8,3 10,5 13,1 15,3 12,6 13,8" fill="#20B0F0" stroke="none"/><text x="0" y="14.5" font-family="Liberation Sans" font-weight="bold" font-size="6.5" fill="#000">Bar</text></svg>
<svg class="a" style="left:507px;top:77px;shape-rendering:auto" width="16" height="16" viewBox="0 0 16 16" shape-rendering="crispEdges"><text x="0" y="8" font-family="Liberation Sans" font-weight="bold" font-size="9" fill="#000">A</text><polygon points="8,8 8,3 10,5 13,1 15,3 12,6 13,8" fill="#F02020" stroke="none"/><text x="0" y="14.5" font-family="Liberation Sans" font-weight="bold" font-size="6.5" fill="#000">Bar</text></svg>
<svg class="a" style="left:530px;top:77px;shape-rendering:auto" width="16" height="16" viewBox="0 0 16 16" shape-rendering="crispEdges"><text x="0" y="8" font-family="Liberation Sans" font-weight="bold" font-size="9" fill="#000">B</text><polygon points="8,8 8,3 10,5 13,1 15,3 12,6 13,8" fill="#F0A020" stroke="none"/><text x="0" y="14.5" font-family="Liberation Sans" font-weight="bold" font-size="6.5" fill="#000">Bar</text></svg>
<svg class="a" style="left:553px;top:77px;shape-rendering:auto" width="16" height="16" viewBox="0 0 16 16" shape-rendering="crispEdges"><text x="0" y="8" font-family="Liberation Sans" font-weight="bold" font-size="9" fill="#000">T</text><polygon points="8,8 8,3 10,5 13,1 15,3 12,6 13,8" fill="#B040F0" stroke="none"/><text x="0" y="14.5" font-family="Liberation Sans" font-weight="bold" font-size="6.5" fill="#000">Bar</text></svg>
<svg class="a" style="left:576px;top:77px;shape-rendering:auto" width="16" height="16" viewBox="0 0 16 16" shape-rendering="crispEdges"><rect x="0" y="4" width="6" height="2" fill="#F00"/><rect x="2" y="2" width="2" height="6" fill="#F00"/><polygon points="8,8 8,3 10,5 13,1 15,3 12,6 13,8" fill="#F0A020" stroke="none"/><text x="0" y="14.5" font-family="Liberation Sans" font-weight="bold" font-size="6.5" fill="#000">Bar</text></svg>
<div class="a" style="left:598px;top:76px;width:1px;height:18px;background:#ACA899"></div>
<div class="a" style="left:599px;top:76px;width:1px;height:18px;background:#fff"></div>
<svg class="a" style="left:605px;top:77px;" width="16" height="14" viewBox="0 0 16 14" shape-rendering="crispEdges"><rect x="2" y="0" width="4" height="3" fill="#000"/><rect x="10" y="0" width="4" height="3" fill="#000"/><rect x="0" y="3" width="7" height="11" fill="#000"/><rect x="9" y="3" width="7" height="11" fill="#000"/><rect x="7" y="5" width="2" height="4" fill="#000"/><rect x="2" y="9" width="2" height="2" fill="#fff"/><rect x="11" y="9" width="2" height="2" fill="#fff"/><rect x="6" y="6" width="4" height="1" fill="#555"/></svg>
<svg class="a" style="left:629px;top:78px;shape-rendering:auto" width="14" height="13" viewBox="0 0 14 13" shape-rendering="crispEdges"><polyline points="2,1 0,1 0,12 2,12" fill="none" stroke="#000" stroke-width="1"/><polygon points="3,6.5 8,2 8,5 13,5 13,8 8,8 8,11" fill="#1040F0" stroke="#000"/></svg>
<svg class="a" style="left:651px;top:78px;shape-rendering:auto" width="14" height="13" viewBox="0 0 14 13" shape-rendering="crispEdges"><polyline points="11,1 13,1 13,12 11,12" fill="none" stroke="#000" stroke-width="1"/><polygon points="10,6.5 5,2 5,5 0,5 0,8 5,8 5,11" fill="#10D010" stroke="#000"/></svg>
<div class="a" style="left:679px;top:73px;width:23px;height:22px;background:#F4F3EE;border:1px solid #D8D4C4"></div>
<svg class="a" style="left:684px;top:77px;shape-rendering:auto" width="15" height="15" viewBox="0 0 15 15" shape-rendering="crispEdges"><rect x="0" y="0" width="15" height="15" fill="#000"/><rect x="1" y="3" width="13" height="11" fill="#F8B0A8"/><rect x="1" y="1" width="13" height="1" fill="#000"/><polyline points="2,7 4,7 4,5 7,5 7,7 10,7 10,5 13,5" fill="none" stroke="#E00" stroke-width="1"/><circle cx="8" cy="10" r="3.5" fill="#F8C0B8" stroke="#000"/><polyline points="8,8 8,10 10,11.5" fill="none" stroke="#000" stroke-width="0.8"/></svg>
<svg class="a" style="left:705px;top:77px;shape-rendering:auto" width="16" height="16" viewBox="0 0 16 16" shape-rendering="crispEdges"><text x="0" y="7.5" font-family="Liberation Sans" font-weight="bold" font-size="8.5" fill="#F00" textLength="15">BUS</text><rect x="1" y="9" width="14" height="6" fill="#000"/><rect x="2" y="10" width="12" height="1" fill="#F0C000"/><rect x="2" y="12" width="12" height="1" fill="#F08080"/><rect x="2" y="13" width="12" height="1" fill="#80E080"/></svg>
<svg class="a" style="left:730px;top:78px;shape-rendering:auto" width="14" height="14" viewBox="0 0 14 14" shape-rendering="crispEdges"><polygon points="0,6 3,3 6,6 3,9" fill="#B8B6A8" stroke="none"/><polygon points="7,8 13,8 10,12" fill="#B8B6A8" stroke="none"/><polyline points="5,1 9,1 9,5 11,7" fill="none" stroke="#C8C6B8" stroke-width="1"/></svg>
<div class="a" style="left:750px;top:76px;width:1px;height:18px;background:#ACA899"></div>
<div class="a" style="left:751px;top:76px;width:1px;height:18px;background:#fff"></div>
<div class="a " style="left:757px;top:76px;font-size:13px;line-height:16px">波形高度</div>
<div class="a" style="left:816px;top:73px;width:57px;height:23px;background:#fff;border-top:1px solid #ACA899;border-left:1px solid #ACA899;border-bottom:1px solid #fff;border-right:1px solid #fff"></div>
<div class="a" style="left:817px;top:74px;width:55px;height:21px;border-top:1px solid #716F64;border-left:1px solid #716F64;border-bottom:1px solid #F1EFE2;border-right:1px solid #F1EFE2"></div>
<div class="a" style="left:854px;top:75px;width:17px;height:19px;background:#ECE9D8;border-top:1px solid #F1EFE2;border-left:1px solid #F1EFE2;border-bottom:1px solid #716F64;border-right:1px solid #716F64"></div>
<div class="a" style="left:855px;top:76px;width:15px;height:17px;border-top:1px solid #fff;border-left:1px solid #fff;border-bottom:1px solid #ACA899;border-right:1px solid #ACA899"></div>
<svg class="a" style="left:859px;top:82px;" width="7" height="4" viewBox="0 0 7 4" shape-rendering="crispEdges"><rect x="0" y="0" width="7" height="1" fill="#000"/><rect x="1" y="1" width="5" height="1" fill="#000"/><rect x="2" y="2" width="3" height="1" fill="#000"/><rect x="3" y="3" width="1" height="1" fill="#000"/></svg>
<div class="a " style="left:820px;top:77px;font-weight:bold;font-size:14px;line-height:14px;">50</div>
<div class="a " style="left:884px;top:76px;font-size:13px;line-height:16px">觸發延遲</div>
<div class="a" style="left:955px;top:74px;width:68px;height:21px;border:1px solid #000;border-top-color:#404040;border-left-color:#404040;background:#ECE9D8"></div>
<div class="a " style="left:977px;top:77px;font-weight:bold;font-size:14px;line-height:15px;color:#ACA899">5ns</div>
<div class="a" style="left:1px;top:97px;width:1022px;height:1px;background:#F5F3E5"></div>
<div class="a" style="left:0px;top:96px;width:1px;height:38px;background:#A8A698"></div>
<div class="a" style="left:1px;top:97px;width:1px;height:36px;background:#F5F3E5"></div>
<div class="a" style="left:1022px;top:96px;width:1px;height:38px;background:#A8A698"></div>
<div class="a" style="left:1px;top:132px;width:1021px;height:1px;background:#F5F3E5"></div>
<div class="a" style="left:0px;top:133px;width:1023px;height:1px;background:#A8A698"></div>
<div class="a" style="left:0px;top:134px;width:1023px;height:3px;background:#F2EFE2"></div>
<div class="a" style="left:0px;top:137px;width:1023px;height:1px;background:#A8A698"></div>
<div class="a " style="left:15px;top:97px;font-family:'Liberation Serif',serif;font-size:12px;line-height:14px">每格:127.969ns</div>
<div class="a " style="left:15px;top:113px;font-family:'Liberation Serif',serif;font-size:12px;line-height:14px">總數:163.84us</div>
<div class="a " style="left:220px;top:97px;font-family:'Liberation Serif',serif;font-size:12px;line-height:14px">中心點:144.881us</div>
<div class="a " style="left:220px;top:113px;font-family:'Liberation Serif',serif;font-size:12px;line-height:14px">觸發點:0ns</div>
<div class="a " style="left:423px;top:97px;font-family:'Liberation Serif',serif;font-size:12px;line-height:14px">Dp Pos:016.375us</div>
<div class="a " style="left:423px;top:113px;font-family:'Liberation Serif',serif;font-size:12px;line-height:14px">Dp Pos:147.465us</div>
<div class="a" style="left:530px;top:97px;width:1px;height:14px;background:#ACA899"></div>
<div class="a" style="left:531px;top:97px;width:1px;height:14px;background:#fff"></div>
<svg class="a" style="left:534px;top:104px;" width="7" height="4" viewBox="0 0 7 4" shape-rendering="crispEdges"><rect x="0" y="0" width="7" height="1" fill="#000"/><rect x="1" y="1" width="5" height="1" fill="#000"/><rect x="2" y="2" width="3" height="1" fill="#000"/><rect x="3" y="3" width="1" height="1" fill="#000"/></svg>
<svg class="a" style="left:528px;top:121px;" width="7" height="4" viewBox="0 0 7 4" shape-rendering="crispEdges"><rect x="0" y="0" width="7" height="1" fill="#000"/><rect x="1" y="1" width="5" height="1" fill="#000"/><rect x="2" y="2" width="3" height="1" fill="#000"/><rect x="3" y="3" width="1" height="1" fill="#000"/></svg>
<div class="a " style="left:627px;top:97px;font-family:'Liberation Serif',serif;font-size:12px;line-height:14px">A - T = 2.825ms</div>
<div class="a " style="left:627px;top:113px;font-family:'Liberation Serif',serif;font-size:12px;line-height:14px">B - T = 2.828ms</div>
<div class="a" style="left:723px;top:97px;width:1px;height:14px;background:#ACA899"></div>
<div class="a" style="left:724px;top:97px;width:1px;height:14px;background:#fff"></div>
<svg class="a" style="left:727px;top:104px;" width="7" height="4" viewBox="0 0 7 4" shape-rendering="crispEdges"><rect x="0" y="0" width="7" height="1" fill="#000"/><rect x="1" y="1" width="5" height="1" fill="#000"/><rect x="2" y="2" width="3" height="1" fill="#000"/><rect x="3" y="3" width="1" height="1" fill="#000"/></svg>
<svg class="a" style="left:727px;top:121px;" width="7" height="4" viewBox="0 0 7 4" shape-rendering="crispEdges"><rect x="0" y="0" width="7" height="1" fill="#000"/><rect x="1" y="1" width="5" height="1" fill="#000"/><rect x="2" y="2" width="3" height="1" fill="#000"/><rect x="3" y="3" width="1" height="1" fill="#000"/></svg>
<div class="a " style="left:830px;top:97px;font-family:'Liberation Serif',serif;font-size:12px;line-height:14px">A - B = 2.506us</div>
<div class="a " style="left:830px;top:113px;font-family:'Liberation Serif',serif;font-size:12px;line-height:14px">壓縮率:否</div>
<div class="a" style="left:928px;top:97px;width:1px;height:14px;background:#ACA899"></div>
<div class="a" style="left:929px;top:97px;width:1px;height:14px;background:#fff"></div>
<svg class="a" style="left:932px;top:104px;" width="7" height="4" viewBox="0 0 7 4" shape-rendering="crispEdges"><rect x="0" y="0" width="7" height="1" fill="#000"/><rect x="1" y="1" width="5" height="1" fill="#000"/><rect x="2" y="2" width="3" height="1" fill="#000"/><rect x="3" y="3" width="1" height="1" fill="#000"/></svg>
<div class="a" style="left:1px;top:138px;width:118px;height:363px;background:#BBBBBB"></div>
<div class="a" style="left:119px;top:137px;width:1px;height:364px;background:#ACA899"></div>
<div class="a" style="left:120px;top:137px;width:1px;height:364px;background:#F5F3E5"></div>
<div class="a" style="left:1px;top:165px;width:118px;height:1px;background:#A8A698"></div>
<div class="a " style="left:11px;top:144px;font-size:12px;line-height:15px">通道名稱</div>
<div class="a" style="left:8px;top:184px;width:13px;height:13px;border:1px solid #B0A890;background:#BBBBBB"></div>
<div class="a" style="left:10px;top:190px;width:9px;height:2px;background:#000"></div>
<div class="a" style="left:22px;top:190px;width:7px;height:1px;background:repeating-linear-gradient(to right,#A8A088 0 1px,transparent 1px 2px)"></div>
<div class="a" style="left:30px;top:192px;width:26px;height:1px;background:#808080"></div>
<div class="a " style="left:61px;top:184px;font-family:'Liberation Serif',serif;font-size:12px;line-height:14px;font-size:12.5px;line-height:15px;letter-spacing:-0.6px">Bus1</div>
<div class="a" style="left:14px;top:197px;width:1px;height:304px;background:repeating-linear-gradient(to bottom,#A8A088 0 1px,transparent 1px 2px)"></div>
<div class="a" style="left:43px;top:216px;width:1px;height:285px;background:repeating-linear-gradient(to bottom,#A8A088 0 1px,transparent 1px 2px)"></div>
<div class="a" style="left:44px;top:242px;width:14px;height:1px;background:repeating-linear-gradient(to right,#A8A088 0 1px,transparent 1px 2px)"></div>
<div class="a " style="left:90px;top:233px;font-family:'Liberation Serif',serif;font-size:12px;line-height:14px;font-size:12px;line-height:14px;letter-spacing:-0.8px">A0</div>
<div class="a " style="left:109px;top:233px;font-family:'Liberation Serif',serif;font-size:12px;line-height:14px;font-size:12px;line-height:14px;letter-spacing:-0.8px;color:#8C8C8C">A0</div>
<svg class="a" style="left:73px;top:234px;shape-rendering:auto" width="13" height="13" viewBox="0 0 13 13" shape-rendering="crispEdges"><path d="M1,10.5 L6,6 L8.3,4 L11.2,1 L12,1.8 L9.5,4.6 L9,6 L5,11 Q3.5,12.5 2,12 Z" fill="#800000"/></svg>
<div class="a" style="left:44px;top:292px;width:14px;height:1px;background:repeating-linear-gradient(to right,#A8A088 0 1px,transparent 1px 2px)"></div>
<div class="a " style="left:90px;top:283px;font-family:'Liberation Serif',serif;font-size:12px;line-height:14px;font-size:12px;line-height:14px;letter-spacing:-0.8px">A1</div>
<div class="a " style="left:109px;top:283px;font-family:'Liberation Serif',serif;font-size:12px;line-height:14px;font-size:12px;line-height:14px;letter-spacing:-0.8px;color:#8C8C8C">A1</div>
<svg class="a" style="left:73px;top:284px;shape-rendering:auto" width="13" height="13" viewBox="0 0 13 13" shape-rendering="crispEdges"><path d="M1,10.5 L6,6 L8.3,4 L11.2,1 L12,1.8 L9.5,4.6 L9,6 L5,11 Q3.5,12.5 2,12 Z" fill="#F00000"/></svg>
<div class="a" style="left:44px;top:342px;width:14px;height:1px;background:repeating-linear-gradient(to right,#A8A088 0 1px,transparent 1px 2px)"></div>
<div class="a" style="left:88px;top:317px;width:18px;height:48px;background:#0A5CF5"></div>
<div class="a " style="left:90px;top:333px;font-family:'Liberation Serif',serif;font-size:12px;line-height:14px;font-size:12px;line-height:14px;letter-spacing:-0.8px;color:#fff">A2</div>
<div class="a " style="left:109px;top:333px;font-family:'Liberation Serif',serif;font-size:12px;line-height:14px;font-size:12px;line-height:14px;letter-spacing:-0.8px;color:#8C8C8C">A2</div>
<svg class="a" style="left:73px;top:334px;shape-rendering:auto" width="13" height="13" viewBox="0 0 13 13" shape-rendering="crispEdges"><path d="M1,10.5 L6,6 L8.3,4 L11.2,1 L12,1.8 L9.5,4.6 L9,6 L5,11 Q3.5,12.5 2,12 Z" fill="#C04018"/></svg>
<div class="a" style="left:44px;top:392px;width:14px;height:1px;background:repeating-linear-gradient(to right,#A8A088 0 1px,transparent 1px 2px)"></div>
<div class="a " style="left:90px;top:383px;font-family:'Liberation Serif',serif;font-size:12px;line-height:14px;font-size:12px;line-height:14px;letter-spacing:-0.8px">A3</div>
<div class="a " style="left:109px;top:383px;font-family:'Liberation Serif',serif;font-size:12px;line-height:14px;font-size:12px;line-height:14px;letter-spacing:-0.8px;color:#8C8C8C">A3</div>
<svg class="a" style="left:73px;top:384px;shape-rendering:auto" width="13" height="13" viewBox="0 0 13 13" shape-rendering="crispEdges"><path d="M1,10.5 L6,6 L8.3,4 L11.2,1 L12,1.8 L9.5,4.6 L9,6 L5,11 Q3.5,12.5 2,12 Z" fill="#F0F000"/></svg>
<div class="a" style="left:44px;top:442px;width:14px;height:1px;background:repeating-linear-gradient(to right,#A8A088 0 1px,transparent 1px 2px)"></div>
<div class="a " style="left:90px;top:433px;font-family:'Liberation Serif',serif;font-size:12px;line-height:14px;font-size:12px;line-height:14px;letter-spacing:-0.8px">A4</div>
<div class="a " style="left:109px;top:433px;font-family:'Liberation Serif',serif;font-size:12px;line-height:14px;font-size:12px;line-height:14px;letter-spacing:-0.8px;color:#8C8C8C">A4</div>
<svg class="a" style="left:73px;top:434px;shape-rendering:auto" width="13" height="13" viewBox="0 0 13 13" shape-rendering="crispEdges"><path d="M1,10.5 L6,6 L8.3,4 L11.2,1 L12,1.8 L9.5,4.6 L9,6 L5,11 Q3.5,12.5 2,12 Z" fill="#10E010"/></svg>
<div class="a" style="left:44px;top:492px;width:14px;height:1px;background:repeating-linear-gradient(to right,#A8A088 0 1px,transparent 1px 2px)"></div>
<div class="a " style="left:90px;top:483px;font-family:'Liberation Serif',serif;font-size:12px;line-height:14px;font-size:12px;line-height:14px;letter-spacing:-0.8px">A5</div>
<div class="a " style="left:109px;top:483px;font-family:'Liberation Serif',serif;font-size:12px;line-height:14px;font-size:12px;line-height:14px;letter-spacing:-0.8px;color:#8C8C8C">A5</div>
<svg class="a" style="left:73px;top:484px;shape-rendering:auto" width="13" height="13" viewBox="0 0 13 13" shape-rendering="crispEdges"><path d="M1,10.5 L6,6 L8.3,4 L11.2,1 L12,1.8 L9.5,4.6 L9,6 L5,11 Q3.5,12.5 2,12 Z" fill="#1010E0"/></svg>
<div class="a" style="left:119px;top:137px;width:4px;height:364px;background:#ECE9D8"></div>
<div class="a" style="left:119px;top:137px;width:1px;height:364px;background:#ACA899"></div>
<div class="a" style="left:120px;top:137px;width:1px;height:364px;background:#F5F3E5"></div>
<div class="a" style="left:123px;top:137px;width:120px;height:364px;background:#ECE9D8"></div>
<div class="a" style="left:123px;top:137px;width:59px;height:29px;border:1px solid #A8A698;background:#ECE9D8"></div>
<div class="a" style="left:124px;top:138px;width:57px;height:27px;border:1px solid #F5F3E5"></div>
<div class="a " style="left:129px;top:144px;font-size:12px;line-height:15px">觸發條件</div>
<div class="a" style="left:186px;top:137px;width:57px;height:29px;border:1px solid #A8A698;background:#ECE9D8"></div>
<div class="a" style="left:187px;top:138px;width:55px;height:27px;border:1px solid #F5F3E5"></div>
<div class="a " style="left:190px;top:144px;font-size:12px;line-height:15px">濾波條件</div>
<div class="a" style="left:124px;top:166px;width:57px;height:49px;border:1px solid #A8A698;background:#ECE9D8"></div>
<div class="a" style="left:125px;top:167px;width:55px;height:47px;border:1px solid #F5F3E5"></div>
<div class="a" style="left:188px;top:166px;width:54px;height:49px;border:1px solid #A8A698;background:#ECE9D8"></div>
<div class="a" style="left:189px;top:167px;width:52px;height:47px;border:1px solid #F5F3E5"></div>
<svg class="a" style="left:208px;top:184px;shape-rendering:auto" width="13" height="13" viewBox="0 0 13 13" shape-rendering="crispEdges"><rect x="0" y="0" width="13" height="13" fill="#C4C4C4"/><rect x="0.5" y="0.5" width="12" height="12" fill="none" stroke="#808080" stroke-dasharray="1,1"/><path d="M1,1 L12,12 M12,1 L1,12" stroke="#808080" stroke-width="0.8"/></svg>
<div class="a" style="left:124px;top:216px;width:57px;height:49px;border:1px solid #A8A698;background:#ECE9D8"></div>
<div class="a" style="left:125px;top:217px;width:55px;height:47px;border:1px solid #F5F3E5"></div>
<div class="a" style="left:188px;top:216px;width:54px;height:49px;border:1px solid #A8A698;background:#ECE9D8"></div>
<div class="a" style="left:189px;top:217px;width:52px;height:47px;border:1px solid #F5F3E5"></div>
<svg class="a" style="left:146px;top:234px;shape-rendering:auto" width="13" height="13" viewBox="0 0 13 13" shape-rendering="crispEdges"><rect x="0" y="0" width="13" height="13" fill="#C4C4C4"/><rect x="0.5" y="0.5" width="12" height="12" fill="none" stroke="#808080" stroke-dasharray="1,1"/><polyline points="0,11 4,11 8,2 13,2" fill="none" stroke="#000" stroke-width="2"/></svg>
<svg class="a" style="left:208px;top:234px;shape-rendering:auto" width="13" height="13" viewBox="0 0 13 13" shape-rendering="crispEdges"><rect x="0" y="0" width="13" height="13" fill="#C4C4C4"/><rect x="0.5" y="0.5" width="12" height="12" fill="none" stroke="#808080" stroke-dasharray="1,1"/><path d="M1,1 L12,12 M12,1 L1,12" stroke="#808080" stroke-width="0.8"/></svg>
<div class="a" style="left:124px;top:266px;width:57px;height:49px;border:1px solid #A8A698;background:#ECE9D8"></div>
<div class="a" style="left:125px;top:267px;width:55px;height:47px;border:1px solid #F5F3E5"></div>
<div class="a" style="left:188px;top:266px;width:54px;height:49px;border:1px solid #A8A698;background:#ECE9D8"></div>
<div class="a" style="left:189px;top:267px;width:52px;height:47px;border:1px solid #F5F3E5"></div>
<svg class="a" style="left:146px;top:284px;shape-rendering:auto" width="13" height="13" viewBox="0 0 13 13" shape-rendering="crispEdges"><rect x="0" y="0" width="13" height="13" fill="#C4C4C4"/><rect x="0.5" y="0.5" width="12" height="12" fill="none" stroke="#808080" stroke-dasharray="1,1"/><path d="M1,1 L12,12 M12,1 L1,12" stroke="#808080" stroke-width="0.8"/></svg>
<svg class="a" style="left:208px;top:284px;shape-rendering:auto" width="13" height="13" viewBox="0 0 13 13" shape-rendering="crispEdges"><rect x="0" y="0" width="13" height="13" fill="#C4C4C4"/><rect x="0.5" y="0.5" width="12" height="12" fill="none" stroke="#808080" stroke-dasharray="1,1"/><path d="M1,1 L12,12 M12,1 L1,12" stroke="#808080" stroke-width="0.8"/></svg>
<div class="a" style="left:124px;top:316px;width:57px;height:50px;background:#ECE9D8;border-top:1px solid #000;border-left:1px solid #000;border-right:1px solid #fff;border-bottom:2px solid #fff"></div>
<div class="a" style="left:172px;top:317px;width:1px;height:47px;background:#ACA899"></div>
<svg class="a" style="left:174px;top:340px;" width="5" height="3" viewBox="0 0 5 3" shape-rendering="crispEdges"><rect x="0" y="0" width="5" height="1" fill="#000"/><rect x="1" y="1" width="3" height="1" fill="#000"/><rect x="2" y="2" width="1" height="1" fill="#000"/></svg>
<div class="a" style="left:188px;top:316px;width:54px;height:50px;background:#ECE9D8;border-top:1px solid #000;border-left:1px solid #000;border-right:1px solid #fff;border-bottom:2px solid #fff"></div>
<div class="a" style="left:232px;top:317px;width:1px;height:47px;background:#ACA899"></div>
<svg class="a" style="left:234px;top:340px;" width="5" height="3" viewBox="0 0 5 3" shape-rendering="crispEdges"><rect x="0" y="0" width="5" height="1" fill="#000"/><rect x="1" y="1" width="3" height="1" fill="#000"/><rect x="2" y="2" width="1" height="1" fill="#000"/></svg>
<svg class="a" style="left:146px;top:334px;shape-rendering:auto" width="13" height="13" viewBox="0 0 13 13" shape-rendering="crispEdges"><rect x="0" y="0" width="13" height="13" fill="#C4C4C4"/><rect x="0.5" y="0.5" width="12" height="12" fill="none" stroke="#808080" stroke-dasharray="1,1"/><path d="M1,1 L12,12 M12,1 L1,12" stroke="#808080" stroke-width="0.8"/></svg>
<svg class="a" style="left:208px;top:334px;shape-rendering:auto" width="13" height="13" viewBox="0 0 13 13" shape-rendering="crispEdges"><rect x="0" y="0" width="13" height="13" fill="#C4C4C4"/><rect x="0.5" y="0.5" width="12" height="12" fill="none" stroke="#808080" stroke-dasharray="1,1"/><path d="M1,1 L12,12 M12,1 L1,12" stroke="#808080" stroke-width="0.8"/></svg>
<div class="a" style="left:124px;top:366px;width:57px;height:49px;border:1px solid #A8A698;background:#ECE9D8"></div>
<div class="a" style="left:125px;top:367px;width:55px;height:47px;border:1px solid #F5F3E5"></div>
<div class="a" style="left:188px;top:366px;width:54px;height:49px;border:1px solid #A8A698;background:#ECE9D8"></div>
<div class="a" style="left:189px;top:367px;width:52px;height:47px;border:1px solid #F5F3E5"></div>
<svg class="a" style="left:146px;top:384px;shape-rendering:auto" width="13" height="13" viewBox="0 0 13 13" shape-rendering="crispEdges"><rect x="0" y="0" width="13" height="13" fill="#C4C4C4"/><rect x="0.5" y="0.5" width="12" height="12" fill="none" stroke="#808080" stroke-dasharray="1,1"/><path d="M1,1 L12,12 M12,1 L1,12" stroke="#808080" stroke-width="0.8"/></svg>
<svg class="a" style="left:208px;top:384px;shape-rendering:auto" width="13" height="13" viewBox="0 0 13 13" shape-rendering="crispEdges"><rect x="0" y="0" width="13" height="13" fill="#C4C4C4"/><rect x="0.5" y="0.5" width="12" height="12" fill="none" stroke="#808080" stroke-dasharray="1,1"/><path d="M1,1 L12,12 M12,1 L1,12" stroke="#808080" stroke-width="0.8"/></svg>
<div class="a" style="left:124px;top:416px;width:57px;height:49px;border:1px solid #A8A698;background:#ECE9D8"></div>
<div class="a" style="left:125px;top:417px;width:55px;height:47px;border:1px solid #F5F3E5"></div>
<div class="a" style="left:188px;top:416px;width:54px;height:49px;border:1px solid #A8A698;background:#ECE9D8"></div>
<div class="a" style="left:189px;top:417px;width:52px;height:47px;border:1px solid #F5F3E5"></div>
<svg class="a" style="left:146px;top:434px;shape-rendering:auto" width="13" height="13" viewBox="0 0 13 13" shape-rendering="crispEdges"><rect x="0" y="0" width="13" height="13" fill="#C4C4C4"/><rect x="0.5" y="0.5" width="12" height="12" fill="none" stroke="#808080" stroke-dasharray="1,1"/><path d="M1,1 L12,12 M12,1 L1,12" stroke="#808080" stroke-width="0.8"/></svg>
<svg class="a" style="left:208px;top:434px;shape-rendering:auto" width="13" height="13" viewBox="0 0 13 13" shape-rendering="crispEdges"><rect x="0" y="0" width="13" height="13" fill="#C4C4C4"/><rect x="0.5" y="0.5" width="12" height="12" fill="none" stroke="#808080" stroke-dasharray="1,1"/><path d="M1,1 L12,12 M12,1 L1,12" stroke="#808080" stroke-width="0.8"/></svg>
<div class="a" style="left:124px;top:466px;width:57px;height:40px;border:1px solid #A8A698;background:#ECE9D8"></div>
<div class="a" style="left:125px;top:467px;width:55px;height:38px;border:1px solid #F5F3E5"></div>
<div class="a" style="left:188px;top:466px;width:54px;height:40px;border:1px solid #A8A698;background:#ECE9D8"></div>
<div class="a" style="left:189px;top:467px;width:52px;height:38px;border:1px solid #F5F3E5"></div>
<svg class="a" style="left:146px;top:484px;shape-rendering:auto" width="13" height="13" viewBox="0 0 13 13" shape-rendering="crispEdges"><rect x="0" y="0" width="13" height="13" fill="#C4C4C4"/><rect x="0.5" y="0.5" width="12" height="12" fill="none" stroke="#808080" stroke-dasharray="1,1"/><path d="M1,1 L12,12 M12,1 L1,12" stroke="#808080" stroke-width="0.8"/></svg>
<svg class="a" style="left:208px;top:484px;shape-rendering:auto" width="13" height="13" viewBox="0 0 13 13" shape-rendering="crispEdges"><rect x="0" y="0" width="13" height="13" fill="#C4C4C4"/><rect x="0.5" y="0.5" width="12" height="12" fill="none" stroke="#808080" stroke-dasharray="1,1"/><path d="M1,1 L12,12 M12,1 L1,12" stroke="#808080" stroke-width="0.8"/></svg>
<div class="a" style="left:182px;top:137px;width:1px;height:364px;background:#ACA899"></div>
<div class="a" style="left:186px;top:137px;width:1px;height:364px;background:#ACA899"></div>
<div class="a" style="left:243px;top:137px;width:1px;height:364px;background:#ACA899"></div>
<div class="a" style="left:244px;top:137px;width:3px;height:364px;background:#ECE9D8"></div>
<div class="a" style="left:246px;top:137px;width:1px;height:364px;background:#ACA899"></div>
<svg class="a" style="left:242px;top:284px;" width="5" height="12" viewBox="0 0 5 12" shape-rendering="crispEdges"><rect x="0" y="0" width="5" height="12" fill="#B8C0D8"/><polygon points="1,6 4,2 4,10" fill="#000"/></svg>
<div class="a" style="left:247px;top:138px;width:759px;height:28px;background:#C0C0C0"></div>
<div class="a" style="left:247px;top:166px;width:759px;height:1px;background:#000"></div>
<div class="a" style="left:247px;top:167px;width:759px;height:334px;background:#fff"></div>
<svg class="a" style="left:247px;top:138px;" width="759" height="29" viewBox="0 0 759 29" shape-rendering="crispEdges"><rect x="0" y="20" width="1" height="8" fill="#000"/><rect x="15" y="23" width="1" height="5" fill="#000"/><rect x="30" y="23" width="1" height="5" fill="#000"/><rect x="45" y="23" width="1" height="5" fill="#000"/><rect x="60" y="23" width="1" height="5" fill="#000"/><rect x="75" y="20" width="1" height="8" fill="#000"/><rect x="90" y="23" width="1" height="5" fill="#000"/><rect x="105" y="23" width="1" height="5" fill="#000"/><rect x="120" y="23" width="1" height="5" fill="#000"/><rect x="135" y="23" width="1" height="5" fill="#000"/><rect x="150" y="20" width="1" height="8" fill="#000"/><rect x="165" y="23" width="1" height="5" fill="#000"/><rect x="180" y="23" width="1" height="5" fill="#000"/><rect x="195" y="23" width="1" height="5" fill="#000"/><rect x="210" y="23" width="1" height="5" fill="#000"/><rect x="225" y="20" width="1" height="8" fill="#000"/><rect x="240" y="23" width="1" height="5" fill="#000"/><rect x="255" y="23" width="1" height="5" fill="#000"/><rect x="270" y="23" width="1" height="5" fill="#000"/><rect x="285" y="23" width="1" height="5" fill="#000"/><rect x="300" y="20" width="1" height="8" fill="#000"/><rect x="315" y="23" width="1" height="5" fill="#000"/><rect x="330" y="23" width="1" height="5" fill="#000"/><rect x="345" y="23" width="1" height="5" fill="#000"/><rect x="360" y="23" width="1" height="5" fill="#000"/><rect x="375" y="20" width="1" height="8" fill="#000"/><rect x="390" y="23" width="1" height="5" fill="#000"/><rect x="405" y="23" width="1" height="5" fill="#000"/><rect x="420" y="23" width="1" height="5" fill="#000"/><rect x="435" y="23" width="1" height="5" fill="#000"/><rect x="450" y="20" width="1" height="8" fill="#000"/><rect x="465" y="23" width="1" height="5" fill="#000"/><rect x="480" y="23" width="1" height="5" fill="#000"/><rect x="495" y="23" width="1" height="5" fill="#000"/><rect x="510" y="23" width="1" height="5" fill="#000"/><rect x="525" y="20" width="1" height="8" fill="#000"/><rect x="540" y="23" width="1" height="5" fill="#000"/><rect x="555" y="23" width="1" height="5" fill="#000"/><rect x="570" y="23" width="1" height="5" fill="#000"/><rect x="585" y="23" width="1" height="5" fill="#000"/><rect x="600" y="20" width="1" height="8" fill="#000"/><rect x="615" y="23" width="1" height="5" fill="#000"/><rect x="630" y="23" width="1" height="5" fill="#000"/><rect x="645" y="23" width="1" height="5" fill="#000"/><rect x="660" y="23" width="1" height="5" fill="#000"/><rect x="675" y="20" width="1" height="8" fill="#000"/><rect x="690" y="23" width="1" height="5" fill="#000"/><rect x="705" y="23" width="1" height="5" fill="#000"/><rect x="720" y="23" width="1" height="5" fill="#000"/><rect x="735" y="23" width="1" height="5" fill="#000"/><rect x="750" y="20" width="1" height="8" fill="#000"/><rect x="374" y="22" width="2" height="6" fill="#000"/></svg>
<div class="a" style="left:284px;top:148px;width:80px;text-align:center;font-family:'Liberation Serif',serif;font-size:11.5px;line-height:12px;letter-spacing:-0.6px">142.321us</div>
<div class="a" style="left:359px;top:148px;width:80px;text-align:center;font-family:'Liberation Serif',serif;font-size:11.5px;line-height:12px;letter-spacing:-0.6px">142.961us</div>
<div class="a" style="left:434px;top:148px;width:80px;text-align:center;font-family:'Liberation Serif',serif;font-size:11.5px;line-height:12px;letter-spacing:-0.6px">143.601us</div>
<div class="a" style="left:509px;top:148px;width:80px;text-align:center;font-family:'Liberation Serif',serif;font-size:11.5px;line-height:12px;letter-spacing:-0.6px">144.241us</div>
<div class="a" style="left:584px;top:148px;width:80px;text-align:center;font-family:'Liberation Serif',serif;font-size:11.5px;line-height:12px;letter-spacing:-0.6px">144.881us</div>
<div class="a" style="left:659px;top:148px;width:80px;text-align:center;font-family:'Liberation Serif',serif;font-size:11.5px;line-height:12px;letter-spacing:-0.6px">145.52us</div>
<div class="a" style="left:734px;top:148px;width:80px;text-align:center;font-family:'Liberation Serif',serif;font-size:11.5px;line-height:12px;letter-spacing:-0.6px">146.16us</div>
<div class="a" style="left:809px;top:148px;width:80px;text-align:center;font-family:'Liberation Serif',serif;font-size:11.5px;line-height:12px;letter-spacing:-0.6px">146.8us</div>
<div class="a" style="left:884px;top:148px;width:80px;text-align:center;font-family:'Liberation Serif',serif;font-size:11.5px;line-height:12px;letter-spacing:-0.6px">147.44us</div>
<div class="a" style="left:959px;top:148px;width:80px;text-align:center;font-family:'Liberation Serif',serif;font-size:11.5px;line-height:12px;letter-spacing:-0.6px">148.08us</div>
<svg class="a" style="left:616px;top:138px;shape-rendering:auto" width="13" height="7" viewBox="0 0 13 7" shape-rendering="crispEdges"><polygon points="0,0 13,0 6.5,7" fill="#F00"/></svg>
<svg class="a" style="left:247px;top:138px;" width="11" height="17" viewBox="0 0 11 17" shape-rendering="crispEdges"><rect x="2" y="4" width="9" height="13" fill="#000"/><rect x="1" y="3" width="9" height="13" fill="#1A8CF0"/><rect x="1" y="1" width="7" height="13" fill="#000"/><rect x="0" y="0" width="6" height="12" fill="#F00"/><rect x="0" y="0" width="1" height="1" fill="#0FF"/><rect x="0" y="7" width="1" height="1" fill="#0FF"/></svg>
<div class="a" style="left:916px;top:138px;width:18px;height:12px;background:#1A7CF0"></div>
<div class="a " style="left:918px;top:139px;font-family:'Liberation Serif',serif;font-size:11px;line-height:11px;color:#FF8C10;letter-spacing:0.5px">Dp</div>
<div class="a" style="left:925px;top:150px;width:1px;height:4px;background:#1A7CF0"></div>
<div class="a" style="left:1000px;top:138px;width:6px;height:15px;background:#00F0F0"></div>
<div class="a" style="left:1000px;top:138px;width:6px;height:2px;background:#F0F000"></div>
<div class="a " style="left:1003px;top:140px;font-family:'Liberation Serif',serif;font-size:12px;line-height:12px;color:#F00">B</div>
<svg class="a" style="left:0px;top:0px;shape-rendering:crispEdges;pointer-events:none" width="1024" height="768" viewBox="0 0 1024 768" shape-rendering="crispEdges"><rect x="250" y="169" width="124" height="1" fill="#008000"/><rect x="250" y="213" width="124" height="1" fill="#008000"/><rect x="249" y="170" width="1" height="5" fill="#008000"/><rect x="248" y="175" width="1" height="33" fill="#008000"/><rect x="249" y="208" width="1" height="5" fill="#008000"/><rect x="374" y="170" width="1" height="5" fill="#008000"/><rect x="375" y="175" width="1" height="12" fill="#008000"/><rect x="376" y="187" width="1" height="10" fill="#008000"/><rect x="375" y="197" width="1" height="11" fill="#008000"/><rect x="374" y="208" width="1" height="5" fill="#008000"/><rect x="379" y="169" width="241" height="1" fill="#008000"/><rect x="379" y="213" width="241" height="1" fill="#008000"/><rect x="378" y="170" width="1" height="5" fill="#008000"/><rect x="377" y="175" width="1" height="6" fill="#008000"/><rect x="377" y="181" width="1" height="6" fill="#008000"/><rect x="376" y="187" width="1" height="10" fill="#008000"/><rect x="377" y="197" width="1" height="6" fill="#008000"/><rect x="377" y="203" width="1" height="5" fill="#008000"/><rect x="378" y="208" width="1" height="5" fill="#008000"/><rect x="620" y="170" width="1" height="5" fill="#008000"/><rect x="621" y="175" width="1" height="12" fill="#008000"/><rect x="622" y="187" width="1" height="10" fill="#008000"/><rect x="621" y="197" width="1" height="11" fill="#008000"/><rect x="620" y="208" width="1" height="5" fill="#008000"/><rect x="625" y="169" width="242" height="1" fill="#008000"/><rect x="625" y="213" width="242" height="1" fill="#008000"/><rect x="624" y="170" width="1" height="5" fill="#008000"/><rect x="623" y="175" width="1" height="6" fill="#008000"/><rect x="623" y="181" width="1" height="6" fill="#008000"/><rect x="622" y="187" width="1" height="10" fill="#008000"/><rect x="623" y="197" width="1" height="6" fill="#008000"/><rect x="623" y="203" width="1" height="5" fill="#008000"/><rect x="624" y="208" width="1" height="5" fill="#008000"/><rect x="867" y="170" width="1" height="5" fill="#008000"/><rect x="868" y="175" width="1" height="12" fill="#008000"/><rect x="869" y="187" width="1" height="10" fill="#008000"/><rect x="868" y="197" width="1" height="11" fill="#008000"/><rect x="867" y="208" width="1" height="5" fill="#008000"/><rect x="872" y="169" width="51" height="1" fill="#008000"/><rect x="872" y="213" width="51" height="1" fill="#008000"/><rect x="871" y="170" width="1" height="5" fill="#008000"/><rect x="870" y="175" width="1" height="6" fill="#008000"/><rect x="870" y="181" width="1" height="6" fill="#008000"/><rect x="869" y="187" width="1" height="10" fill="#008000"/><rect x="870" y="197" width="1" height="6" fill="#008000"/><rect x="870" y="203" width="1" height="5" fill="#008000"/><rect x="871" y="208" width="1" height="5" fill="#008000"/><rect x="923" y="170" width="1" height="5" fill="#008000"/><rect x="924" y="175" width="1" height="33" fill="#008000"/><rect x="923" y="208" width="1" height="5" fill="#008000"/><rect x="247" y="263" width="130" height="1" fill="#800000"/><rect x="376" y="218" width="1" height="46" fill="#800000"/><rect x="376" y="218" width="247" height="2" fill="#800000"/><rect x="622" y="218" width="1" height="46" fill="#800000"/><rect x="622" y="263" width="248" height="1" fill="#800000"/><rect x="869" y="218" width="1" height="46" fill="#800000"/><rect x="869" y="218" width="56" height="2" fill="#800000"/><rect x="247" y="313" width="376" height="1" fill="#F00000"/><rect x="622" y="268" width="1" height="46" fill="#F00000"/><rect x="622" y="268" width="303" height="2" fill="#F00000"/><rect x="247" y="318" width="678" height="2" fill="#FF7830"/><rect x="247" y="413" width="678" height="1" fill="#F8F800"/><rect x="247" y="463" width="678" height="1" fill="#10F080"/></svg>
<div class="a" style="left:247px;top:167px;width:1px;height:334px;background:#F00"></div>
<div class="a" style="left:925px;top:167px;width:1px;height:334px;background:#1A7CF0"></div>
<div class="a" style="left:285.5px;top:183px;width:120px;text-align:center;font-family:'Liberation Serif',serif;font-size:17px;line-height:17px;letter-spacing:-0.55px">0X44</div>
<div class="a" style="left:439.5px;top:183px;width:120px;text-align:center;font-family:'Liberation Serif',serif;font-size:17px;line-height:17px;letter-spacing:-0.55px">0X45</div>
<div class="a" style="left:686px;top:183px;width:120px;text-align:center;font-family:'Liberation Serif',serif;font-size:17px;line-height:17px;letter-spacing:-0.55px">0X46</div>
<div class="a" style="left:837px;top:183px;width:120px;text-align:center;font-family:'Liberation Serif',serif;font-size:17px;line-height:17px;letter-spacing:-0.55px">0X47</div>
<div class="a" style="left:247px;top:241px;width:120px;text-align:center;font-family:'Liberation Serif',serif;font-size:17px;line-height:17px;letter-spacing:-0.55px">2.1us</div>
<div class="a" style="left:435px;top:241px;width:120px;text-align:center;font-family:'Liberation Serif',serif;font-size:17px;line-height:17px;letter-spacing:-0.55px">2.1us</div>
<div class="a" style="left:681px;top:241px;width:120px;text-align:center;font-family:'Liberation Serif',serif;font-size:17px;line-height:17px;letter-spacing:-0.55px">2.105us</div>
<div class="a" style="left:832.5px;top:241px;width:120px;text-align:center;font-family:'Liberation Serif',serif;font-size:17px;line-height:17px;letter-spacing:-0.55px">475ns</div>
<div class="a" style="left:370px;top:291px;width:120px;text-align:center;font-family:'Liberation Serif',serif;font-size:17px;line-height:17px;letter-spacing:-0.55px">4.195us</div>
<div class="a" style="left:709px;top:291px;width:120px;text-align:center;font-family:'Liberation Serif',serif;font-size:17px;line-height:17px;letter-spacing:-0.55px">2.58us</div>
<div class="a" style="left:521px;top:341px;width:120px;text-align:center;font-family:'Liberation Serif',serif;font-size:17px;line-height:17px;letter-spacing:-0.55px">6.775us</div>
<div class="a" style="left:521px;top:391px;width:120px;text-align:center;font-family:'Liberation Serif',serif;font-size:17px;line-height:17px;letter-spacing:-0.55px">15.165us</div>
<div class="a" style="left:521px;top:441px;width:120px;text-align:center;font-family:'Liberation Serif',serif;font-size:17px;line-height:17px;letter-spacing:-0.55px">15.165us</div>
<div class="a" style="left:521px;top:491px;width:120px;text-align:center;font-family:'Liberation Serif',serif;font-size:17px;line-height:17px;letter-spacing:-0.55px">15.165us</div>
<div class="a" style="left:247px;top:501px;width:760px;height:16px;background:#F3F1EC"></div>
<div class="a" style="left:1006px;top:138px;width:17px;height:363px;background:linear-gradient(to right,#F3F1EC,#FDFDFB)"></div>
<div class="a" style="left:1007px;top:138px;width:15px;height:17px;border:1px solid #fff;border-radius:2px;background:linear-gradient(135deg,#D8E4FC 0%,#C2D4FB 50%,#B0C6F8 100%);box-shadow:inset 0 0 0 1px #B4C8F6"></div>
<svg class="a" style="left:1010px;top:143px;shape-rendering:auto" width="10" height="7" viewBox="0 0 10 7" shape-rendering="crispEdges"><polyline points="1,5 5,1 9,5" fill="none" stroke="#4D6185" stroke-width="2"/></svg>
<div class="a" style="left:1007px;top:155px;width:15px;height:60px;border:1px solid #fff;border-radius:2px;background:linear-gradient(135deg,#D8E4FC 0%,#C2D4FB 50%,#B0C6F8 100%);box-shadow:inset 0 0 0 1px #B4C8F6"></div>
<div class="a" style="left:1011px;top:181px;width:7px;height:1px;background:#EEF4FE"></div>
<div class="a" style="left:1011px;top:182px;width:7px;height:1px;background:#8CA8E8"></div>
<div class="a" style="left:1011px;top:183px;width:7px;height:1px;background:#EEF4FE"></div>
<div class="a" style="left:1011px;top:184px;width:7px;height:1px;background:#8CA8E8"></div>
<div class="a" style="left:1011px;top:185px;width:7px;height:1px;background:#EEF4FE"></div>
<div class="a" style="left:1011px;top:186px;width:7px;height:1px;background:#8CA8E8"></div>
<div class="a" style="left:1011px;top:187px;width:7px;height:1px;background:#EEF4FE"></div>
<div class="a" style="left:1011px;top:188px;width:7px;height:1px;background:#8CA8E8"></div>
<div class="a" style="left:1007px;top:483px;width:15px;height:17px;border:1px solid #fff;border-radius:2px;background:linear-gradient(135deg,#D8E4FC 0%,#C2D4FB 50%,#B0C6F8 100%);box-shadow:inset 0 0 0 1px #B4C8F6"></div>
<svg class="a" style="left:1010px;top:488px;shape-rendering:auto" width="10" height="7" viewBox="0 0 10 7" shape-rendering="crispEdges"><polyline points="1,1 5,5 9,1" fill="none" stroke="#4D6185" stroke-width="2"/></svg>
<div class="a" style="left:1px;top:501px;width:118px;height:16px;background:linear-gradient(#F3F1EC,#FDFDFB)"></div>
<div class="a" style="left:1px;top:501px;width:16px;height:16px;border:1px solid #fff;border-radius:2px;background:linear-gradient(135deg,#D8E4FC 0%,#C2D4FB 50%,#B0C6F8 100%);box-shadow:inset 0 0 0 1px #B4C8F6"></div>
<svg class="a" style="left:6px;top:504px;shape-rendering:auto" width="7" height="10" viewBox="0 0 7 10" shape-rendering="crispEdges"><polyline points="5,1 1,5 5,9" fill="none" stroke="#4D6185" stroke-width="2"/></svg>
<div class="a" style="left:103px;top:501px;width:16px;height:16px;border:1px solid #fff;border-radius:2px;background:linear-gradient(135deg,#D8E4FC 0%,#C2D4FB 50%,#B0C6F8 100%);box-shadow:inset 0 0 0 1px #B4C8F6"></div>
<svg class="a" style="left:108px;top:504px;shape-rendering:auto" width="7" height="10" viewBox="0 0 7 10" shape-rendering="crispEdges"><polyline points="1,1 5,5 1,9" fill="none" stroke="#4D6185" stroke-width="2"/></svg>
<div class="a" style="left:18px;top:501px;width:84px;height:16px;border:1px solid #fff;border-radius:2px;background:linear-gradient(135deg,#D8E4FC 0%,#C2D4FB 50%,#B0C6F8 100%);box-shadow:inset 0 0 0 1px #B4C8F6"></div>
<div class="a" style="left:56px;top:505px;width:1px;height:7px;background:#EEF4FE"></div>
<div class="a" style="left:57px;top:505px;width:1px;height:7px;background:#8CA8E8"></div>
<div class="a" style="left:58px;top:505px;width:1px;height:7px;background:#EEF4FE"></div>
<div class="a" style="left:59px;top:505px;width:1px;height:7px;background:#8CA8E8"></div>
<div class="a" style="left:60px;top:505px;width:1px;height:7px;background:#EEF4FE"></div>
<div class="a" style="left:61px;top:505px;width:1px;height:7px;background:#8CA8E8"></div>
<div class="a" style="left:62px;top:505px;width:1px;height:7px;background:#EEF4FE"></div>
<div class="a" style="left:63px;top:505px;width:1px;height:7px;background:#8CA8E8"></div>
<div class="a" style="left:124px;top:501px;width:58px;height:16px;background:linear-gradient(#F3F1EC,#FDFDFB)"></div>
<div class="a" style="left:124px;top:501px;width:16px;height:16px;border:1px solid #fff;border-radius:2px;background:linear-gradient(135deg,#D8E4FC 0%,#C2D4FB 50%,#B0C6F8 100%);box-shadow:inset 0 0 0 1px #B4C8F6"></div>
<svg class="a" style="left:129px;top:504px;shape-rendering:auto" width="7" height="10" viewBox="0 0 7 10" shape-rendering="crispEdges"><polyline points="5,1 1,5 5,9" fill="none" stroke="#4D6185" stroke-width="2"/></svg>
<div class="a" style="left:166px;top:501px;width:16px;height:16px;border:1px solid #fff;border-radius:2px;background:linear-gradient(135deg,#D8E4FC 0%,#C2D4FB 50%,#B0C6F8 100%);box-shadow:inset 0 0 0 1px #B4C8F6"></div>
<svg class="a" style="left:171px;top:504px;shape-rendering:auto" width="7" height="10" viewBox="0 0 7 10" shape-rendering="crispEdges"><polyline points="1,1 5,5 1,9" fill="none" stroke="#4D6185" stroke-width="2"/></svg>
<div class="a" style="left:141px;top:501px;width:16px;height:16px;border:1px solid #fff;border-radius:2px;background:linear-gradient(135deg,#D8E4FC 0%,#C2D4FB 50%,#B0C6F8 100%);box-shadow:inset 0 0 0 1px #B4C8F6"></div>
<div class="a" style="left:145px;top:505px;width:1px;height:7px;background:#EEF4FE"></div>
<div class="a" style="left:146px;top:505px;width:1px;height:7px;background:#8CA8E8"></div>
<div class="a" style="left:147px;top:505px;width:1px;height:7px;background:#EEF4FE"></div>
<div class="a" style="left:148px;top:505px;width:1px;height:7px;background:#8CA8E8"></div>
<div class="a" style="left:149px;top:505px;width:1px;height:7px;background:#EEF4FE"></div>
<div class="a" style="left:150px;top:505px;width:1px;height:7px;background:#8CA8E8"></div>
<div class="a" style="left:151px;top:505px;width:1px;height:7px;background:#EEF4FE"></div>
<div class="a" style="left:152px;top:505px;width:1px;height:7px;background:#8CA8E8"></div>
<div class="a" style="left:188px;top:501px;width:54px;height:16px;background:linear-gradient(#F3F1EC,#FDFDFB)"></div>
<div class="a" style="left:188px;top:501px;width:16px;height:16px;border:1px solid #fff;border-radius:2px;background:linear-gradient(135deg,#D8E4FC 0%,#C2D4FB 50%,#B0C6F8 100%);box-shadow:inset 0 0 0 1px #B4C8F6"></div>
<svg class="a" style="left:193px;top:504px;shape-rendering:auto" width="7" height="10" viewBox="0 0 7 10" shape-rendering="crispEdges"><polyline points="5,1 1,5 5,9" fill="none" stroke="#4D6185" stroke-width="2"/></svg>
<div class="a" style="left:226px;top:501px;width:16px;height:16px;border:1px solid #fff;border-radius:2px;background:linear-gradient(135deg,#D8E4FC 0%,#C2D4FB 50%,#B0C6F8 100%);box-shadow:inset 0 0 0 1px #B4C8F6"></div>
<svg class="a" style="left:231px;top:504px;shape-rendering:auto" width="7" height="10" viewBox="0 0 7 10" shape-rendering="crispEdges"><polyline points="1,1 5,5 1,9" fill="none" stroke="#4D6185" stroke-width="2"/></svg>
<div class="a" style="left:204px;top:501px;width:16px;height:16px;border:1px solid #fff;border-radius:2px;background:linear-gradient(135deg,#D8E4FC 0%,#C2D4FB 50%,#B0C6F8 100%);box-shadow:inset 0 0 0 1px #B4C8F6"></div>
<div class="a" style="left:208px;top:505px;width:1px;height:7px;background:#EEF4FE"></div>
<div class="a" style="left:209px;top:505px;width:1px;height:7px;background:#8CA8E8"></div>
<div class="a" style="left:210px;top:505px;width:1px;height:7px;background:#EEF4FE"></div>
<div class="a" style="left:211px;top:505px;width:1px;height:7px;background:#8CA8E8"></div>
<div class="a" style="left:212px;top:505px;width:1px;height:7px;background:#EEF4FE"></div>
<div class="a" style="left:213px;top:505px;width:1px;height:7px;background:#8CA8E8"></div>
<div class="a" style="left:214px;top:505px;width:1px;height:7px;background:#EEF4FE"></div>
<div class="a" style="left:215px;top:505px;width:1px;height:7px;background:#8CA8E8"></div>
<div class="a" style="left:247px;top:501px;width:759px;height:16px;background:linear-gradient(#F3F1EC,#FDFDFB)"></div>
<div class="a" style="left:247px;top:501px;width:16px;height:16px;border:1px solid #fff;border-radius:2px;background:linear-gradient(135deg,#D8E4FC 0%,#C2D4FB 50%,#B0C6F8 100%);box-shadow:inset 0 0 0 1px #B4C8F6"></div>
<svg class="a" style="left:252px;top:504px;shape-rendering:auto" width="7" height="10" viewBox="0 0 7 10" shape-rendering="crispEdges"><polyline points="5,1 1,5 5,9" fill="none" stroke="#4D6185" stroke-width="2"/></svg>
<div class="a" style="left:990px;top:501px;width:16px;height:16px;border:1px solid #fff;border-radius:2px;background:linear-gradient(135deg,#D8E4FC 0%,#C2D4FB 50%,#B0C6F8 100%);box-shadow:inset 0 0 0 1px #B4C8F6"></div>
<svg class="a" style="left:995px;top:504px;shape-rendering:auto" width="7" height="10" viewBox="0 0 7 10" shape-rendering="crispEdges"><polyline points="1,1 5,5 1,9" fill="none" stroke="#4D6185" stroke-width="2"/></svg>
<div class="a" style="left:971px;top:501px;width:7px;height:16px;border:1px solid #fff;border-radius:2px;background:linear-gradient(135deg,#D8E4FC 0%,#C2D4FB 50%,#B0C6F8 100%);box-shadow:inset 0 0 0 1px #B4C8F6"></div>
<div class="a" style="left:119px;top:501px;width:5px;height:16px;background:#ECE9D8"></div>
<div class="a" style="left:182px;top:501px;width:6px;height:16px;background:#ECE9D8"></div>
<div class="a" style="left:242px;top:501px;width:5px;height:16px;background:#ECE9D8"></div>
<div class="a" style="left:119px;top:501px;width:1px;height:16px;background:#ACA899"></div>
<div class="a" style="left:182px;top:501px;width:1px;height:16px;background:#ACA899"></div>
<div class="a" style="left:186px;top:501px;width:1px;height:16px;background:#ACA899"></div>
<div class="a" style="left:246px;top:501px;width:1px;height:16px;background:#ACA899"></div>
<div class="a" style="left:0px;top:517px;width:1022px;height:1px;background:#ACA899"></div>
<div class="a" style="left:0px;top:518px;width:1022px;height:1px;background:#fff"></div>
<div class="a " style="left:3px;top:520px;font-size:13px;font-weight:bold;line-height:14px">×</div>
<div class="a" style="left:4px;top:537px;width:1px;height:207px;background:#fff"></div>
<div class="a" style="left:5px;top:537px;width:1px;height:207px;background:#fff"></div>
<div class="a" style="left:6px;top:537px;width:1px;height:207px;background:#ACA899"></div>
<div class="a" style="left:7px;top:537px;width:1px;height:207px;background:#fff"></div>
<div class="a" style="left:8px;top:537px;width:1px;height:207px;background:#fff"></div>
<div class="a" style="left:9px;top:537px;width:1px;height:207px;background:#ACA899"></div>
<div class="a" style="left:4px;top:743px;width:6px;height:1px;background:#ACA899"></div>
<div class="a" style="left:21px;top:521px;width:58px;height:21px;border:1px solid #000"></div>
<div class="a" style="left:22px;top:522px;width:56px;height:19px;background:#ECE9D8;border-top:1px solid #F1EFE2;border-left:1px solid #F1EFE2;border-bottom:1px solid #716F64;border-right:1px solid #716F64"></div>
<div class="a" style="left:23px;top:523px;width:54px;height:17px;border-top:1px solid #fff;border-left:1px solid #fff;border-bottom:1px solid #ACA899;border-right:1px solid #ACA899"></div>
<div class="a" style="left:21px;top:521px;width:58px;height:21px;text-align:center;font-size:12px;line-height:21px">設定...</div>
<div class="a" style="left:84px;top:521px;width:58px;height:21px;background:#ECE9D8;border-top:1px solid #F1EFE2;border-left:1px solid #F1EFE2;border-bottom:1px solid #716F64;border-right:1px solid #716F64"></div>
<div class="a" style="left:85px;top:522px;width:56px;height:19px;border-top:1px solid #fff;border-left:1px solid #fff;border-bottom:1px solid #ACA899;border-right:1px solid #ACA899"></div>
<div class="a" style="left:84px;top:521px;width:58px;height:21px;text-align:center;font-size:12px;line-height:21px">刷新</div>
<div class="a" style="left:146px;top:521px;width:58px;height:21px;background:#ECE9D8;border-top:1px solid #F1EFE2;border-left:1px solid #F1EFE2;border-bottom:1px solid #716F64;border-right:1px solid #716F64"></div>
<div class="a" style="left:147px;top:522px;width:56px;height:19px;border-top:1px solid #fff;border-left:1px solid #fff;border-bottom:1px solid #ACA899;border-right:1px solid #ACA899"></div>
<div class="a" style="left:146px;top:521px;width:58px;height:21px;text-align:center;font-size:12px;line-height:21px">匯出...</div>
<div class="a" style="left:209px;top:521px;width:124px;height:21px;background:#ECE9D8;border-top:1px solid #F1EFE2;border-left:1px solid #F1EFE2;border-bottom:1px solid #716F64;border-right:1px solid #716F64"></div>
<div class="a" style="left:210px;top:522px;width:122px;height:19px;border-top:1px solid #fff;border-left:1px solid #fff;border-bottom:1px solid #ACA899;border-right:1px solid #ACA899"></div>
<div class="a" style="left:209px;top:521px;width:124px;height:21px;text-align:center;font-size:12px;line-height:21px">封包與波形同步設定</div>
<div class="a" style="left:18px;top:549px;width:983px;height:194px;background:#fff;border-top:1px solid #808080;border-left:1px solid #808080"></div>
<div class="a" style="left:1001px;top:549px;width:20px;height:194px;background:repeating-conic-gradient(#F4F3EE 0 25%,#ECE9D8 0 50%) 0 0/2px 2px"></div>
<div class="a" style="left:1001px;top:549px;width:20px;height:17px;background:#ECE9D8;border-top:1px solid #F1EFE2;border-left:1px solid #F1EFE2;border-bottom:1px solid #716F64;border-right:1px solid #716F64"></div>
<div class="a" style="left:1002px;top:550px;width:18px;height:15px;border-top:1px solid #fff;border-left:1px solid #fff;border-bottom:1px solid #ACA899;border-right:1px solid #ACA899"></div>
<svg class="a" style="left:1007px;top:554px;" width="7" height="4" viewBox="0 0 7 4" shape-rendering="crispEdges"><rect x="3" y="0" width="1" height="1" fill="#000"/><rect x="2" y="1" width="3" height="1" fill="#000"/><rect x="1" y="2" width="5" height="1" fill="#000"/><rect x="0" y="3" width="7" height="1" fill="#000"/></svg>
<div class="a" style="left:1001px;top:566px;width:20px;height:11px;background:#ECE9D8;border-top:1px solid #F1EFE2;border-left:1px solid #F1EFE2;border-bottom:1px solid #716F64;border-right:1px solid #716F64"></div>
<div class="a" style="left:1002px;top:567px;width:18px;height:9px;border-top:1px solid #fff;border-left:1px solid #fff;border-bottom:1px solid #ACA899;border-right:1px solid #ACA899"></div>
<div class="a" style="left:1001px;top:727px;width:20px;height:17px;background:#ECE9D8;border-top:1px solid #F1EFE2;border-left:1px solid #F1EFE2;border-bottom:1px solid #716F64;border-right:1px solid #716F64"></div>
<div class="a" style="left:1002px;top:728px;width:18px;height:15px;border-top:1px solid #fff;border-left:1px solid #fff;border-bottom:1px solid #ACA899;border-right:1px solid #ACA899"></div>
<svg class="a" style="left:1008px;top:734px;" width="7" height="4" viewBox="0 0 7 4" shape-rendering="crispEdges"><rect x="0" y="0" width="7" height="1" fill="#000"/><rect x="1" y="1" width="5" height="1" fill="#000"/><rect x="2" y="2" width="3" height="1" fill="#000"/><rect x="3" y="3" width="1" height="1" fill="#000"/></svg>
<div class="a" style="left:19px;top:551px;width:278px;height:36px;background:#000"></div>
<div class="a" style="left:20px;top:552px;width:71px;height:15px;background:#2E3F99;color:#fff;text-align:center;font-size:14px;line-height:15px">封包&nbsp;#</div>
<div class="a" style="left:20px;top:568px;width:71px;height:18px;background:#fff;text-align:center;font-size:12.5px;line-height:18px">1</div>
<div class="a" style="left:92px;top:552px;width:113px;height:15px;background:#2E3F99;color:#fff;text-align:center;font-size:14px;line-height:15px">名稱</div>
<div class="a" style="left:92px;top:568px;width:113px;height:18px;background:#fff;text-align:center;font-size:12.5px;line-height:18px">Bus1(General)</div>
<div class="a" style="left:206px;top:552px;width:90px;height:15px;background:#2E3F99;color:#fff;text-align:center;font-size:14px;line-height:15px">起始點</div>
<div class="a" style="left:206px;top:568px;width:90px;height:18px;background:#fff;text-align:center;font-size:12.5px;line-height:18px">-016.375us</div>
<div class="a" style="left:298px;top:551px;width:49px;height:36px;background:#000"></div>
<div class="a" style="left:299px;top:552px;width:47px;height:15px;background:#2ECC30;color:#fff;text-align:center;font-size:14px;line-height:15px">資料</div>
<div class="a" style="left:299px;top:568px;width:47px;height:18px;background:#fff;text-align:center;font-size:12.5px;line-height:18px">0X00</div>
<div class="a" style="left:349px;top:551px;width:76px;height:36px;background:#000"></div>
<div class="a" style="left:350px;top:552px;width:74px;height:15px;background:#74B8D0;color:#fff;text-align:center;font-size:14px;line-height:15px">長度</div>
<div class="a" style="left:350px;top:568px;width:74px;height:18px;background:#fff;text-align:center;font-size:12.5px;line-height:18px">16.375us</div>
<div class="a" style="left:19px;top:589px;width:259px;height:36px;background:#000"></div>
<div class="a" style="left:20px;top:590px;width:71px;height:15px;background:#2E3F99;color:#fff;text-align:center;font-size:14px;line-height:15px">封包&nbsp;#</div>
<div class="a" style="left:20px;top:606px;width:71px;height:18px;background:#fff;text-align:center;font-size:12.5px;line-height:18px">2</div>
<div class="a" style="left:92px;top:590px;width:113px;height:15px;background:#2E3F99;color:#fff;text-align:center;font-size:14px;line-height:15px">名稱</div>
<div class="a" style="left:92px;top:606px;width:113px;height:18px;background:#fff;text-align:center;font-size:12.5px;line-height:18px">Bus1(General)</div>
<div class="a" style="left:206px;top:590px;width:71px;height:15px;background:#2E3F99;color:#fff;text-align:center;font-size:14px;line-height:15px">起始點</div>
<div class="a" style="left:206px;top:606px;width:71px;height:18px;background:#fff;text-align:center;font-size:12.5px;line-height:18px">0ns</div>
<div class="a" style="left:280px;top:589px;width:49px;height:36px;background:#000"></div>
<div class="a" style="left:281px;top:590px;width:47px;height:15px;background:#2ECC30;color:#fff;text-align:center;font-size:14px;line-height:15px">資料</div>
<div class="a" style="left:281px;top:606px;width:47px;height:18px;background:#fff;text-align:center;font-size:12.5px;line-height:18px">0X01</div>
<div class="a" style="left:331px;top:589px;width:68px;height:36px;background:#000"></div>
<div class="a" style="left:332px;top:590px;width:66px;height:15px;background:#74B8D0;color:#fff;text-align:center;font-size:14px;line-height:15px">長度</div>
<div class="a" style="left:332px;top:606px;width:66px;height:18px;background:#fff;text-align:center;font-size:12.5px;line-height:18px">2.105us</div>
<div class="a" style="left:19px;top:627px;width:254px;height:36px;background:#000"></div>
<div class="a" style="left:20px;top:628px;width:71px;height:15px;background:#2E3F99;color:#fff;text-align:center;font-size:14px;line-height:15px">封包&nbsp;#</div>
<div class="a" style="left:20px;top:644px;width:71px;height:18px;background:#fff;text-align:center;font-size:12.5px;line-height:18px">3</div>
<div class="a" style="left:92px;top:628px;width:113px;height:15px;background:#2E3F99;color:#fff;text-align:center;font-size:14px;line-height:15px">名稱</div>
<div class="a" style="left:92px;top:644px;width:113px;height:18px;background:#fff;text-align:center;font-size:12.5px;line-height:18px">Bus1(General)</div>
<div class="a" style="left:206px;top:628px;width:66px;height:15px;background:#2E3F99;color:#fff;text-align:center;font-size:14px;line-height:15px">起始點</div>
<div class="a" style="left:206px;top:644px;width:66px;height:18px;background:#fff;text-align:center;font-size:12.5px;line-height:18px">2.105us</div>
<div class="a" style="left:274px;top:627px;width:49px;height:36px;background:#000"></div>
<div class="a" style="left:275px;top:628px;width:47px;height:15px;background:#2ECC30;color:#fff;text-align:center;font-size:14px;line-height:15px">資料</div>
<div class="a" style="left:275px;top:644px;width:47px;height:18px;background:#fff;text-align:center;font-size:12.5px;line-height:18px">0X02</div>
<div class="a" style="left:325px;top:627px;width:62px;height:36px;background:#000"></div>
<div class="a" style="left:326px;top:628px;width:60px;height:15px;background:#74B8D0;color:#fff;text-align:center;font-size:14px;line-height:15px">長度</div>
<div class="a" style="left:326px;top:644px;width:60px;height:18px;background:#fff;text-align:center;font-size:12.5px;line-height:18px">2.1us</div>
<div class="a" style="left:19px;top:665px;width:254px;height:36px;background:#000"></div>
<div class="a" style="left:20px;top:666px;width:71px;height:15px;background:#2E3F99;color:#fff;text-align:center;font-size:14px;line-height:15px">封包&nbsp;#</div>
<div class="a" style="left:20px;top:682px;width:71px;height:18px;background:#fff;text-align:center;font-size:12.5px;line-height:18px">4</div>
<div class="a" style="left:92px;top:666px;width:113px;height:15px;background:#2E3F99;color:#fff;text-align:center;font-size:14px;line-height:15px">名稱</div>
<div class="a" style="left:92px;top:682px;width:113px;height:18px;background:#fff;text-align:center;font-size:12.5px;line-height:18px">Bus1(General)</div>
<div class="a" style="left:206px;top:666px;width:66px;height:15px;background:#2E3F99;color:#fff;text-align:center;font-size:14px;line-height:15px">起始點</div>
<div class="a" style="left:206px;top:682px;width:66px;height:18px;background:#fff;text-align:center;font-size:12.5px;line-height:18px">4.205us</div>
<div class="a" style="left:274px;top:665px;width:49px;height:36px;background:#000"></div>
<div class="a" style="left:275px;top:666px;width:47px;height:15px;background:#2ECC30;color:#fff;text-align:center;font-size:14px;line-height:15px">資料</div>
<div class="a" style="left:275px;top:682px;width:47px;height:18px;background:#fff;text-align:center;font-size:12.5px;line-height:18px">0X03</div>
<div class="a" style="left:325px;top:665px;width:68px;height:36px;background:#000"></div>
<div class="a" style="left:326px;top:666px;width:66px;height:15px;background:#74B8D0;color:#fff;text-align:center;font-size:14px;line-height:15px">長度</div>
<div class="a" style="left:326px;top:682px;width:66px;height:18px;background:#fff;text-align:center;font-size:12.5px;line-height:18px">2.095us</div>
<div class="a" style="left:19px;top:703px;width:260px;height:36px;background:#000"></div>
<div class="a" style="left:20px;top:704px;width:71px;height:15px;background:#2E3F99;color:#fff;text-align:center;font-size:14px;line-height:15px">封包&nbsp;#</div>
<div class="a" style="left:20px;top:720px;width:71px;height:18px;background:#fff;text-align:center;font-size:12.5px;line-height:18px">5</div>
<div class="a" style="left:92px;top:704px;width:113px;height:15px;background:#2E3F99;color:#fff;text-align:center;font-size:14px;line-height:15px">名稱</div>
<div class="a" style="left:92px;top:720px;width:113px;height:18px;background:#fff;text-align:center;font-size:12.5px;line-height:18px">Bus1(General)</div>
<div class="a" style="left:206px;top:704px;width:72px;height:15px;background:#2E3F99;color:#fff;text-align:center;font-size:14px;line-height:15px">起始點</div>
<div class="a" style="left:206px;top:720px;width:72px;height:18px;background:#fff;text-align:center;font-size:12.5px;line-height:18px">6.3us</div>
<div class="a" style="left:280px;top:703px;width:97px;height:36px;background:#000"></div>
<div class="a" style="left:281px;top:704px;width:47px;height:15px;background:#2ECC30;color:#fff;text-align:center;font-size:14px;line-height:15px">資料</div>
<div class="a" style="left:281px;top:720px;width:47px;height:18px;background:#fff;text-align:center;font-size:12.5px;line-height:18px">0X00</div>
<div class="a" style="left:329px;top:704px;width:47px;height:15px;background:#2ECC30;color:#fff;text-align:center;font-size:14px;line-height:15px">資料</div>
<div class="a" style="left:329px;top:720px;width:47px;height:18px;background:#fff;text-align:center;font-size:12.5px;line-height:18px">0X04</div>
<div class="a" style="left:379px;top:703px;width:67px;height:36px;background:#000"></div>
<div class="a" style="left:380px;top:704px;width:65px;height:15px;background:#74B8D0;color:#fff;text-align:center;font-size:14px;line-height:15px">長度</div>
<div class="a" style="left:380px;top:720px;width:65px;height:18px;background:#fff;text-align:center;font-size:12.5px;line-height:18px">2.095us</div>
<svg class="a" style="left:19px;top:635px;shape-rendering:auto" width="9" height="17" viewBox="0 0 9 17" shape-rendering="crispEdges"><polygon points="0,0 9,8.5 0,17" fill="#F00"/></svg>
<div class="a" style="left:0px;top:748px;width:1022px;height:1px;background:#ACA899"></div>
<div class="a" style="left:0px;top:749px;width:1022px;height:1px;background:#fff"></div>
<div class="a " style="left:2px;top:752px;font-size:12px;line-height:14px">就緒</div>
<div class="a" style="left:479px;top:751px;width:388px;height:15px;border-top:1px solid #ACA899;border-left:1px solid #ACA899;border-right:1px solid #fff"></div>
<div class="a" style="left:869px;top:751px;width:66px;height:15px;border-top:1px solid #ACA899;border-left:1px solid #ACA899;border-right:1px solid #fff"></div>
<div class="a " style="left:871px;top:752px;font-size:12px;line-height:14px">停止!</div>
<div class="a" style="left:938px;top:751px;width:84px;height:15px;border-top:1px solid #ACA899;border-left:1px solid #ACA899;border-right:1px solid #fff"></div>
<div class="a " style="left:940px;top:752px;font-size:12px;line-height:14px">一般模式</div>
<div class="a" style="left:0px;top:766px;width:1024px;height:2px;background:#3A6EE0"></div>
<div class="a" style="left:411px;top:103px;width:115px;height:38px;border:4px solid #F40808;border-radius:2px"></div>
<div class="a" style="left:850px;top:128px;width:89px;height:364px;border:5px solid #F40808;border-radius:2px"></div>
</body></html>
